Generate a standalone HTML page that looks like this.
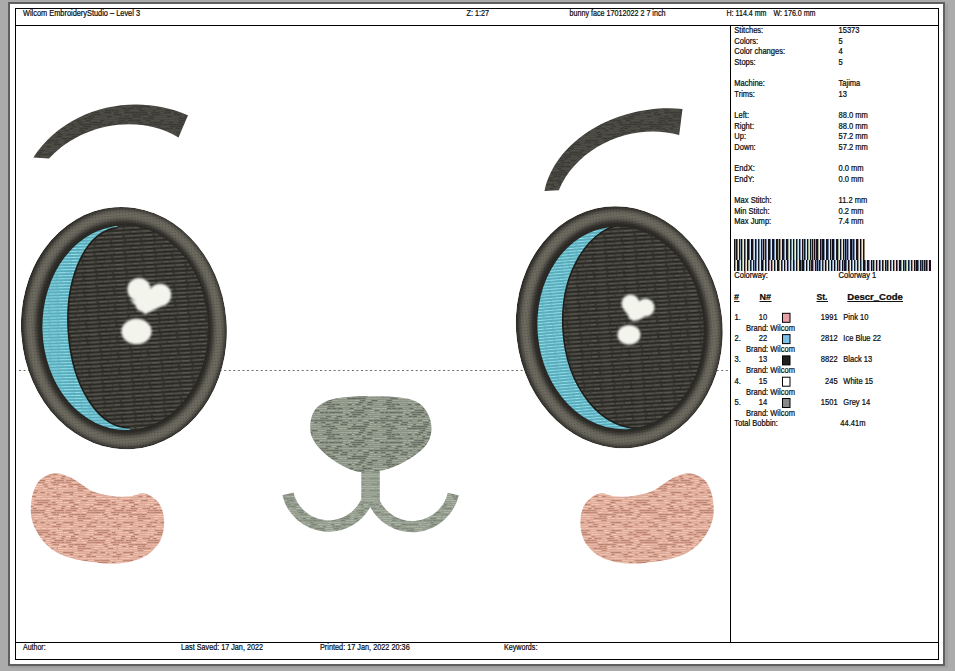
<!DOCTYPE html>
<html><head><meta charset="utf-8"><style>
html,body{margin:0;padding:0;background:#ababab;}
svg{display:block;}
text{font-family:"Liberation Sans", sans-serif;}
</style></head><body>
<svg width="955" height="671" viewBox="0 0 955 671">
<defs><filter id="blur2" x="-20%" y="-20%" width="140%" height="140%"><feGaussianBlur stdDeviation="2.2"/></filter>
<filter id="blur05" x="-20%" y="-20%" width="140%" height="140%"><feGaussianBlur stdDeviation="1.0"/></filter>
<pattern id="pupilTex" width="30" height="16" patternUnits="userSpaceOnUse"><rect width="30" height="16" fill="#383732"/><rect x="-5.2" y="0.0" width="9.1" height="1.3" fill="#595850"/><rect x="24.8" y="0.0" width="9.1" height="1.3" fill="#595850"/><rect x="4.9" y="0.0" width="7.0" height="1.3" fill="#53524a"/><rect x="13.3" y="0.0" width="6.3" height="1.3" fill="#595850"/><rect x="20.3" y="0.0" width="4.2" height="1.3" fill="#53524a"/><rect x="25.8" y="0.0" width="8.6" height="1.3" fill="#595850"/><rect x="-4.2" y="0.0" width="8.6" height="1.3" fill="#595850"/><rect x="0" y="2.2" width="30" height="1.0" fill="#22211e"/><rect x="-4.4" y="4.0" width="8.8" height="1.3" fill="#5e5d54"/><rect x="25.6" y="4.0" width="8.8" height="1.3" fill="#5e5d54"/><rect x="6.8" y="4.0" width="9.4" height="1.3" fill="#595850"/><rect x="16.8" y="4.0" width="7.9" height="1.3" fill="#595850"/><rect x="27.0" y="4.0" width="6.3" height="1.3" fill="#595850"/><rect x="-3.0" y="4.0" width="6.3" height="1.3" fill="#595850"/><rect x="0" y="6.2" width="30" height="1.0" fill="#22211e"/><rect x="-1.6" y="8.0" width="7.2" height="1.3" fill="#53524a"/><rect x="28.4" y="8.0" width="7.2" height="1.3" fill="#53524a"/><rect x="7.9" y="8.0" width="7.3" height="1.3" fill="#53524a"/><rect x="16.2" y="8.0" width="5.3" height="1.3" fill="#53524a"/><rect x="23.9" y="8.0" width="9.6" height="1.3" fill="#53524a"/><rect x="-6.1" y="8.0" width="9.6" height="1.3" fill="#53524a"/><rect x="0" y="10.2" width="30" height="1.0" fill="#22211e"/><rect x="-2.7" y="12.0" width="7.9" height="1.3" fill="#595850"/><rect x="27.3" y="12.0" width="7.9" height="1.3" fill="#595850"/><rect x="7.0" y="12.0" width="8.3" height="1.3" fill="#53524a"/><rect x="16.0" y="12.0" width="6.0" height="1.3" fill="#5e5d54"/><rect x="24.5" y="12.0" width="7.0" height="1.3" fill="#53524a"/><rect x="-5.5" y="12.0" width="7.0" height="1.3" fill="#53524a"/><rect x="0" y="14.2" width="30" height="1.0" fill="#22211e"/></pattern>
<pattern id="blueTex" width="30" height="12" patternUnits="userSpaceOnUse"><rect width="30" height="12" fill="#70c6d8"/><rect x="-0.3" y="0.0" width="7.7" height="1.0" fill="#90dcea"/><rect x="29.7" y="0.0" width="7.7" height="1.0" fill="#90dcea"/><rect x="8.1" y="0.0" width="4.8" height="1.0" fill="#90dcea"/><rect x="14.5" y="0.0" width="6.3" height="1.0" fill="#96e0ec"/><rect x="21.7" y="0.0" width="4.1" height="1.0" fill="#90dcea"/><rect x="27.2" y="0.0" width="3.8" height="1.0" fill="#96e0ec"/><rect x="-2.8" y="0.0" width="3.8" height="1.0" fill="#96e0ec"/><rect x="0" y="1.5" width="30" height="1.0" fill="#44929f"/><rect x="-1.2" y="3.0" width="7.3" height="1.0" fill="#84d4e4"/><rect x="28.8" y="3.0" width="7.3" height="1.0" fill="#84d4e4"/><rect x="8.0" y="3.0" width="5.7" height="1.0" fill="#96e0ec"/><rect x="15.0" y="3.0" width="7.5" height="1.0" fill="#90dcea"/><rect x="23.6" y="3.0" width="7.7" height="1.0" fill="#96e0ec"/><rect x="-6.4" y="3.0" width="7.7" height="1.0" fill="#96e0ec"/><rect x="0" y="4.5" width="30" height="1.0" fill="#44929f"/><rect x="-0.7" y="6.0" width="3.8" height="1.0" fill="#90dcea"/><rect x="29.3" y="6.0" width="3.8" height="1.0" fill="#90dcea"/><rect x="4.0" y="6.0" width="3.1" height="1.0" fill="#96e0ec"/><rect x="7.9" y="6.0" width="5.6" height="1.0" fill="#96e0ec"/><rect x="15.4" y="6.0" width="6.4" height="1.0" fill="#90dcea"/><rect x="23.8" y="6.0" width="5.2" height="1.0" fill="#96e0ec"/><rect x="0" y="7.5" width="30" height="1.0" fill="#44929f"/><rect x="-0.6" y="9.0" width="6.8" height="1.0" fill="#84d4e4"/><rect x="29.4" y="9.0" width="6.8" height="1.0" fill="#84d4e4"/><rect x="7.3" y="9.0" width="7.9" height="1.0" fill="#96e0ec"/><rect x="15.9" y="9.0" width="6.8" height="1.0" fill="#84d4e4"/><rect x="24.3" y="9.0" width="6.3" height="1.0" fill="#90dcea"/><rect x="-5.7" y="9.0" width="6.3" height="1.0" fill="#90dcea"/><rect x="0" y="10.5" width="30" height="1.0" fill="#44929f"/></pattern>
<pattern id="cheekTex" width="60" height="30" patternUnits="userSpaceOnUse"><rect width="60" height="30" fill="#dea896"/><rect x="-3.0" y="0.0" width="4.2" height="1.1" fill="#c08a78"/><rect x="57.0" y="0.0" width="4.2" height="1.1" fill="#c08a78"/><rect x="2.2" y="0.0" width="3.9" height="1.1" fill="#e6b6a4"/><rect x="6.2" y="0.0" width="2.1" height="1.1" fill="#b88270"/><rect x="8.6" y="0.0" width="2.9" height="1.1" fill="#b88270"/><rect x="12.2" y="0.0" width="4.2" height="1.1" fill="#b88270"/><rect x="17.1" y="0.0" width="2.6" height="1.1" fill="#f2c8b6"/><rect x="20.8" y="0.0" width="4.1" height="1.1" fill="#eec2b0"/><rect x="25.7" y="0.0" width="2.3" height="1.1" fill="#e6b6a4"/><rect x="28.0" y="0.0" width="5.1" height="1.1" fill="#c08a78"/><rect x="33.7" y="0.0" width="4.9" height="1.1" fill="#b88270"/><rect x="39.4" y="0.0" width="5.7" height="1.1" fill="#b88270"/><rect x="45.9" y="0.0" width="4.3" height="1.1" fill="#f2c8b6"/><rect x="51.3" y="0.0" width="2.4" height="1.1" fill="#f2c8b6"/><rect x="54.3" y="0.0" width="3.0" height="1.1" fill="#b88270"/><rect x="58.3" y="0.0" width="5.4" height="1.1" fill="#b88270"/><rect x="-1.7" y="0.0" width="5.4" height="1.1" fill="#b88270"/><rect x="-2.5" y="2.0" width="3.4" height="1.1" fill="#e6b6a4"/><rect x="57.5" y="2.0" width="3.4" height="1.1" fill="#e6b6a4"/><rect x="1.4" y="2.0" width="2.9" height="1.1" fill="#c08a78"/><rect x="5.2" y="2.0" width="5.7" height="1.1" fill="#c08a78"/><rect x="12.1" y="2.0" width="4.7" height="1.1" fill="#f2c8b6"/><rect x="17.6" y="2.0" width="3.3" height="1.1" fill="#e6b6a4"/><rect x="22.0" y="2.0" width="4.3" height="1.1" fill="#f2c8b6"/><rect x="27.0" y="2.0" width="6.0" height="1.1" fill="#c08a78"/><rect x="33.3" y="2.0" width="2.3" height="1.1" fill="#b88270"/><rect x="35.7" y="2.0" width="5.2" height="1.1" fill="#b88270"/><rect x="42.0" y="2.0" width="2.1" height="1.1" fill="#b88270"/><rect x="45.0" y="2.0" width="5.5" height="1.1" fill="#eec2b0"/><rect x="51.2" y="2.0" width="5.0" height="1.1" fill="#b88270"/><rect x="57.1" y="2.0" width="3.3" height="1.1" fill="#c08a78"/><rect x="-2.9" y="2.0" width="3.3" height="1.1" fill="#c08a78"/><rect x="-0.0" y="4.0" width="3.2" height="1.1" fill="#eec2b0"/><rect x="60.0" y="4.0" width="3.2" height="1.1" fill="#eec2b0"/><rect x="3.4" y="4.0" width="4.1" height="1.1" fill="#f2c8b6"/><rect x="8.7" y="4.0" width="3.2" height="1.1" fill="#c08a78"/><rect x="12.0" y="4.0" width="2.2" height="1.1" fill="#c08a78"/><rect x="14.6" y="4.0" width="5.8" height="1.1" fill="#b88270"/><rect x="20.9" y="4.0" width="5.5" height="1.1" fill="#b88270"/><rect x="27.1" y="4.0" width="4.4" height="1.1" fill="#e6b6a4"/><rect x="31.6" y="4.0" width="5.9" height="1.1" fill="#e6b6a4"/><rect x="37.8" y="4.0" width="4.5" height="1.1" fill="#f2c8b6"/><rect x="43.5" y="4.0" width="3.7" height="1.1" fill="#c08a78"/><rect x="47.9" y="4.0" width="4.2" height="1.1" fill="#eec2b0"/><rect x="53.0" y="4.0" width="5.9" height="1.1" fill="#c08a78"/><rect x="59.0" y="4.0" width="4.5" height="1.1" fill="#f2c8b6"/><rect x="-1.0" y="4.0" width="4.5" height="1.1" fill="#f2c8b6"/><rect x="-1.5" y="6.0" width="3.9" height="1.1" fill="#c08a78"/><rect x="58.5" y="6.0" width="3.9" height="1.1" fill="#c08a78"/><rect x="3.1" y="6.0" width="3.1" height="1.1" fill="#b88270"/><rect x="6.2" y="6.0" width="2.2" height="1.1" fill="#eec2b0"/><rect x="9.6" y="6.0" width="3.0" height="1.1" fill="#b88270"/><rect x="13.0" y="6.0" width="4.4" height="1.1" fill="#f2c8b6"/><rect x="17.9" y="6.0" width="3.3" height="1.1" fill="#c08a78"/><rect x="22.1" y="6.0" width="3.1" height="1.1" fill="#b88270"/><rect x="25.3" y="6.0" width="5.3" height="1.1" fill="#e6b6a4"/><rect x="31.4" y="6.0" width="2.5" height="1.1" fill="#e6b6a4"/><rect x="34.2" y="6.0" width="5.2" height="1.1" fill="#f2c8b6"/><rect x="39.8" y="6.0" width="4.7" height="1.1" fill="#eec2b0"/><rect x="44.6" y="6.0" width="3.3" height="1.1" fill="#c08a78"/><rect x="48.7" y="6.0" width="2.9" height="1.1" fill="#f2c8b6"/><rect x="51.7" y="6.0" width="5.0" height="1.1" fill="#f2c8b6"/><rect x="57.7" y="6.0" width="3.8" height="1.1" fill="#f2c8b6"/><rect x="-2.3" y="6.0" width="3.8" height="1.1" fill="#f2c8b6"/><rect x="-3.9" y="8.0" width="5.8" height="1.1" fill="#c08a78"/><rect x="56.1" y="8.0" width="5.8" height="1.1" fill="#c08a78"/><rect x="2.9" y="8.0" width="5.4" height="1.1" fill="#f2c8b6"/><rect x="9.3" y="8.0" width="3.4" height="1.1" fill="#eec2b0"/><rect x="13.7" y="8.0" width="3.4" height="1.1" fill="#f2c8b6"/><rect x="17.5" y="8.0" width="4.1" height="1.1" fill="#c08a78"/><rect x="22.2" y="8.0" width="4.5" height="1.1" fill="#c08a78"/><rect x="27.2" y="8.0" width="3.6" height="1.1" fill="#b88270"/><rect x="31.0" y="8.0" width="2.0" height="1.1" fill="#e6b6a4"/><rect x="34.2" y="8.0" width="3.7" height="1.1" fill="#f2c8b6"/><rect x="38.0" y="8.0" width="3.8" height="1.1" fill="#e6b6a4"/><rect x="43.0" y="8.0" width="4.2" height="1.1" fill="#f2c8b6"/><rect x="48.2" y="8.0" width="5.4" height="1.1" fill="#c08a78"/><rect x="53.8" y="8.0" width="3.0" height="1.1" fill="#eec2b0"/><rect x="57.8" y="8.0" width="4.8" height="1.1" fill="#f2c8b6"/><rect x="-2.2" y="8.0" width="4.8" height="1.1" fill="#f2c8b6"/><rect x="-0.4" y="10.0" width="4.3" height="1.1" fill="#eec2b0"/><rect x="59.6" y="10.0" width="4.3" height="1.1" fill="#eec2b0"/><rect x="4.5" y="10.0" width="2.5" height="1.1" fill="#e6b6a4"/><rect x="7.3" y="10.0" width="4.7" height="1.1" fill="#e6b6a4"/><rect x="12.6" y="10.0" width="2.2" height="1.1" fill="#e6b6a4"/><rect x="15.0" y="10.0" width="2.5" height="1.1" fill="#e6b6a4"/><rect x="18.0" y="10.0" width="5.1" height="1.1" fill="#c08a78"/><rect x="23.4" y="10.0" width="2.5" height="1.1" fill="#eec2b0"/><rect x="26.1" y="10.0" width="5.2" height="1.1" fill="#f2c8b6"/><rect x="32.3" y="10.0" width="2.0" height="1.1" fill="#e6b6a4"/><rect x="35.4" y="10.0" width="2.2" height="1.1" fill="#c08a78"/><rect x="37.9" y="10.0" width="4.5" height="1.1" fill="#e6b6a4"/><rect x="42.8" y="10.0" width="3.9" height="1.1" fill="#eec2b0"/><rect x="47.8" y="10.0" width="5.1" height="1.1" fill="#eec2b0"/><rect x="53.0" y="10.0" width="2.3" height="1.1" fill="#eec2b0"/><rect x="56.3" y="10.0" width="2.3" height="1.1" fill="#e6b6a4"/><rect x="59.2" y="10.0" width="2.6" height="1.1" fill="#eec2b0"/><rect x="-0.8" y="10.0" width="2.6" height="1.1" fill="#eec2b0"/><rect x="-1.4" y="12.0" width="4.3" height="1.1" fill="#c08a78"/><rect x="58.6" y="12.0" width="4.3" height="1.1" fill="#c08a78"/><rect x="3.3" y="12.0" width="6.0" height="1.1" fill="#b88270"/><rect x="9.4" y="12.0" width="4.2" height="1.1" fill="#b88270"/><rect x="14.5" y="12.0" width="4.3" height="1.1" fill="#eec2b0"/><rect x="19.2" y="12.0" width="4.4" height="1.1" fill="#e6b6a4"/><rect x="24.1" y="12.0" width="5.2" height="1.1" fill="#e6b6a4"/><rect x="30.4" y="12.0" width="2.2" height="1.1" fill="#b88270"/><rect x="33.5" y="12.0" width="3.3" height="1.1" fill="#b88270"/><rect x="37.3" y="12.0" width="3.0" height="1.1" fill="#e6b6a4"/><rect x="40.6" y="12.0" width="4.4" height="1.1" fill="#b88270"/><rect x="45.3" y="12.0" width="2.5" height="1.1" fill="#eec2b0"/><rect x="48.9" y="12.0" width="3.5" height="1.1" fill="#e6b6a4"/><rect x="53.3" y="12.0" width="3.0" height="1.1" fill="#b88270"/><rect x="57.2" y="12.0" width="5.8" height="1.1" fill="#e6b6a4"/><rect x="-2.8" y="12.0" width="5.8" height="1.1" fill="#e6b6a4"/><rect x="-1.3" y="14.0" width="4.9" height="1.1" fill="#e6b6a4"/><rect x="58.7" y="14.0" width="4.9" height="1.1" fill="#e6b6a4"/><rect x="4.2" y="14.0" width="5.2" height="1.1" fill="#eec2b0"/><rect x="10.1" y="14.0" width="2.9" height="1.1" fill="#b88270"/><rect x="13.1" y="14.0" width="2.4" height="1.1" fill="#eec2b0"/><rect x="16.2" y="14.0" width="3.5" height="1.1" fill="#eec2b0"/><rect x="20.1" y="14.0" width="5.4" height="1.1" fill="#eec2b0"/><rect x="26.5" y="14.0" width="4.7" height="1.1" fill="#c08a78"/><rect x="31.9" y="14.0" width="5.2" height="1.1" fill="#eec2b0"/><rect x="38.3" y="14.0" width="4.3" height="1.1" fill="#e6b6a4"/><rect x="43.4" y="14.0" width="2.4" height="1.1" fill="#eec2b0"/><rect x="47.0" y="14.0" width="2.2" height="1.1" fill="#c08a78"/><rect x="50.3" y="14.0" width="2.7" height="1.1" fill="#eec2b0"/><rect x="53.3" y="14.0" width="2.7" height="1.1" fill="#f2c8b6"/><rect x="56.6" y="14.0" width="4.8" height="1.1" fill="#b88270"/><rect x="-3.4" y="14.0" width="4.8" height="1.1" fill="#b88270"/><rect x="-1.6" y="16.0" width="5.8" height="1.1" fill="#e6b6a4"/><rect x="58.4" y="16.0" width="5.8" height="1.1" fill="#e6b6a4"/><rect x="4.7" y="16.0" width="2.3" height="1.1" fill="#e6b6a4"/><rect x="7.3" y="16.0" width="5.7" height="1.1" fill="#f2c8b6"/><rect x="13.5" y="16.0" width="4.3" height="1.1" fill="#e6b6a4"/><rect x="18.6" y="16.0" width="4.1" height="1.1" fill="#b88270"/><rect x="22.8" y="16.0" width="3.6" height="1.1" fill="#f2c8b6"/><rect x="26.6" y="16.0" width="4.0" height="1.1" fill="#b88270"/><rect x="31.7" y="16.0" width="4.1" height="1.1" fill="#b88270"/><rect x="36.5" y="16.0" width="5.4" height="1.1" fill="#f2c8b6"/><rect x="42.2" y="16.0" width="2.8" height="1.1" fill="#e6b6a4"/><rect x="45.7" y="16.0" width="5.7" height="1.1" fill="#e6b6a4"/><rect x="52.5" y="16.0" width="3.2" height="1.1" fill="#b88270"/><rect x="56.4" y="16.0" width="4.3" height="1.1" fill="#c08a78"/><rect x="-3.6" y="16.0" width="4.3" height="1.1" fill="#c08a78"/><rect x="-2.8" y="18.0" width="3.1" height="1.1" fill="#b88270"/><rect x="57.2" y="18.0" width="3.1" height="1.1" fill="#b88270"/><rect x="0.5" y="18.0" width="4.3" height="1.1" fill="#f2c8b6"/><rect x="5.2" y="18.0" width="5.1" height="1.1" fill="#f2c8b6"/><rect x="10.8" y="18.0" width="4.8" height="1.1" fill="#e6b6a4"/><rect x="15.8" y="18.0" width="4.3" height="1.1" fill="#e6b6a4"/><rect x="20.2" y="18.0" width="6.0" height="1.1" fill="#eec2b0"/><rect x="27.2" y="18.0" width="3.6" height="1.1" fill="#eec2b0"/><rect x="31.4" y="18.0" width="2.9" height="1.1" fill="#f2c8b6"/><rect x="35.1" y="18.0" width="5.1" height="1.1" fill="#eec2b0"/><rect x="41.3" y="18.0" width="5.4" height="1.1" fill="#f2c8b6"/><rect x="47.8" y="18.0" width="5.1" height="1.1" fill="#f2c8b6"/><rect x="53.1" y="18.0" width="4.8" height="1.1" fill="#eec2b0"/><rect x="59.0" y="18.0" width="3.0" height="1.1" fill="#eec2b0"/><rect x="-1.0" y="18.0" width="3.0" height="1.1" fill="#eec2b0"/><rect x="-2.3" y="20.0" width="4.9" height="1.1" fill="#eec2b0"/><rect x="57.7" y="20.0" width="4.9" height="1.1" fill="#eec2b0"/><rect x="2.8" y="20.0" width="3.1" height="1.1" fill="#c08a78"/><rect x="5.9" y="20.0" width="3.8" height="1.1" fill="#c08a78"/><rect x="9.7" y="20.0" width="3.3" height="1.1" fill="#b88270"/><rect x="13.5" y="20.0" width="2.3" height="1.1" fill="#e6b6a4"/><rect x="16.7" y="20.0" width="4.0" height="1.1" fill="#f2c8b6"/><rect x="21.3" y="20.0" width="2.5" height="1.1" fill="#c08a78"/><rect x="23.8" y="20.0" width="3.7" height="1.1" fill="#b88270"/><rect x="28.6" y="20.0" width="5.6" height="1.1" fill="#eec2b0"/><rect x="34.9" y="20.0" width="4.8" height="1.1" fill="#c08a78"/><rect x="40.6" y="20.0" width="3.2" height="1.1" fill="#c08a78"/><rect x="43.9" y="20.0" width="5.8" height="1.1" fill="#c08a78"/><rect x="50.5" y="20.0" width="4.1" height="1.1" fill="#eec2b0"/><rect x="55.5" y="20.0" width="4.0" height="1.1" fill="#eec2b0"/><rect x="-1.3" y="22.0" width="4.3" height="1.1" fill="#f2c8b6"/><rect x="58.7" y="22.0" width="4.3" height="1.1" fill="#f2c8b6"/><rect x="3.8" y="22.0" width="4.9" height="1.1" fill="#f2c8b6"/><rect x="8.9" y="22.0" width="5.6" height="1.1" fill="#b88270"/><rect x="14.6" y="22.0" width="5.7" height="1.1" fill="#f2c8b6"/><rect x="21.4" y="22.0" width="4.6" height="1.1" fill="#e6b6a4"/><rect x="26.5" y="22.0" width="3.2" height="1.1" fill="#f2c8b6"/><rect x="30.3" y="22.0" width="3.2" height="1.1" fill="#f2c8b6"/><rect x="34.4" y="22.0" width="2.4" height="1.1" fill="#f2c8b6"/><rect x="37.7" y="22.0" width="4.2" height="1.1" fill="#b88270"/><rect x="42.3" y="22.0" width="3.1" height="1.1" fill="#b88270"/><rect x="45.4" y="22.0" width="2.5" height="1.1" fill="#b88270"/><rect x="48.6" y="22.0" width="3.0" height="1.1" fill="#e6b6a4"/><rect x="52.0" y="22.0" width="3.3" height="1.1" fill="#b88270"/><rect x="55.9" y="22.0" width="5.2" height="1.1" fill="#eec2b0"/><rect x="-4.1" y="22.0" width="5.2" height="1.1" fill="#eec2b0"/><rect x="-0.6" y="24.0" width="2.4" height="1.1" fill="#c08a78"/><rect x="59.4" y="24.0" width="2.4" height="1.1" fill="#c08a78"/><rect x="2.5" y="24.0" width="4.7" height="1.1" fill="#e6b6a4"/><rect x="8.2" y="24.0" width="4.9" height="1.1" fill="#f2c8b6"/><rect x="14.0" y="24.0" width="4.3" height="1.1" fill="#b88270"/><rect x="19.2" y="24.0" width="5.0" height="1.1" fill="#e6b6a4"/><rect x="24.9" y="24.0" width="5.4" height="1.1" fill="#f2c8b6"/><rect x="31.0" y="24.0" width="2.7" height="1.1" fill="#f2c8b6"/><rect x="33.9" y="24.0" width="3.0" height="1.1" fill="#c08a78"/><rect x="37.0" y="24.0" width="5.2" height="1.1" fill="#b88270"/><rect x="43.3" y="24.0" width="3.5" height="1.1" fill="#e6b6a4"/><rect x="47.9" y="24.0" width="3.2" height="1.1" fill="#b88270"/><rect x="52.4" y="24.0" width="4.7" height="1.1" fill="#c08a78"/><rect x="58.2" y="24.0" width="4.7" height="1.1" fill="#eec2b0"/><rect x="-1.8" y="24.0" width="4.7" height="1.1" fill="#eec2b0"/><rect x="-1.1" y="26.0" width="2.0" height="1.1" fill="#f2c8b6"/><rect x="58.9" y="26.0" width="2.0" height="1.1" fill="#f2c8b6"/><rect x="1.5" y="26.0" width="4.1" height="1.1" fill="#b88270"/><rect x="5.8" y="26.0" width="5.1" height="1.1" fill="#f2c8b6"/><rect x="11.0" y="26.0" width="4.0" height="1.1" fill="#b88270"/><rect x="15.1" y="26.0" width="3.1" height="1.1" fill="#f2c8b6"/><rect x="18.4" y="26.0" width="5.2" height="1.1" fill="#e6b6a4"/><rect x="24.7" y="26.0" width="2.1" height="1.1" fill="#e6b6a4"/><rect x="27.1" y="26.0" width="2.3" height="1.1" fill="#e6b6a4"/><rect x="29.4" y="26.0" width="3.4" height="1.1" fill="#c08a78"/><rect x="33.8" y="26.0" width="4.8" height="1.1" fill="#f2c8b6"/><rect x="38.7" y="26.0" width="5.4" height="1.1" fill="#eec2b0"/><rect x="44.9" y="26.0" width="5.0" height="1.1" fill="#c08a78"/><rect x="51.1" y="26.0" width="2.8" height="1.1" fill="#eec2b0"/><rect x="54.9" y="26.0" width="3.7" height="1.1" fill="#f2c8b6"/><rect x="59.3" y="26.0" width="2.4" height="1.1" fill="#eec2b0"/><rect x="-0.7" y="26.0" width="2.4" height="1.1" fill="#eec2b0"/><rect x="-0.6" y="28.0" width="4.8" height="1.1" fill="#b88270"/><rect x="59.4" y="28.0" width="4.8" height="1.1" fill="#b88270"/><rect x="4.8" y="28.0" width="4.8" height="1.1" fill="#e6b6a4"/><rect x="10.6" y="28.0" width="2.8" height="1.1" fill="#b88270"/><rect x="13.8" y="28.0" width="3.9" height="1.1" fill="#b88270"/><rect x="18.2" y="28.0" width="3.8" height="1.1" fill="#eec2b0"/><rect x="22.9" y="28.0" width="3.5" height="1.1" fill="#c08a78"/><rect x="26.9" y="28.0" width="3.4" height="1.1" fill="#b88270"/><rect x="30.6" y="28.0" width="2.0" height="1.1" fill="#f2c8b6"/><rect x="32.9" y="28.0" width="3.5" height="1.1" fill="#b88270"/><rect x="37.0" y="28.0" width="2.6" height="1.1" fill="#eec2b0"/><rect x="39.9" y="28.0" width="3.6" height="1.1" fill="#f2c8b6"/><rect x="44.3" y="28.0" width="2.6" height="1.1" fill="#e6b6a4"/><rect x="47.0" y="28.0" width="4.0" height="1.1" fill="#eec2b0"/><rect x="52.0" y="28.0" width="3.6" height="1.1" fill="#c08a78"/><rect x="56.1" y="28.0" width="4.8" height="1.1" fill="#eec2b0"/><rect x="-3.9" y="28.0" width="4.8" height="1.1" fill="#eec2b0"/></pattern>
<pattern id="noseTex" width="60" height="30" patternUnits="userSpaceOnUse"><rect width="60" height="30" fill="#8a9184"/><rect x="56.9" y="0.0" width="2.4" height="1.1" fill="#646c60"/><rect x="-0.1" y="0.0" width="2.4" height="1.1" fill="#a8b0a0"/><rect x="59.9" y="0.0" width="2.4" height="1.1" fill="#a8b0a0"/><rect x="2.8" y="0.0" width="5.7" height="1.1" fill="#a8b0a0"/><rect x="8.7" y="0.0" width="4.1" height="1.1" fill="#6a7266"/><rect x="13.8" y="0.0" width="5.3" height="1.1" fill="#6a7266"/><rect x="19.4" y="0.0" width="5.7" height="1.1" fill="#6a7266"/><rect x="26.0" y="0.0" width="2.8" height="1.1" fill="#6a7266"/><rect x="29.2" y="0.0" width="5.5" height="1.1" fill="#6a7266"/><rect x="34.7" y="0.0" width="4.4" height="1.1" fill="#646c60"/><rect x="39.8" y="0.0" width="2.7" height="1.1" fill="#646c60"/><rect x="42.8" y="0.0" width="5.8" height="1.1" fill="#98a090"/><rect x="49.6" y="0.0" width="2.0" height="1.1" fill="#6a7266"/><rect x="52.3" y="0.0" width="5.5" height="1.1" fill="#98a090"/><rect x="58.1" y="0.0" width="3.7" height="1.1" fill="#6a7266"/><rect x="-1.9" y="0.0" width="3.7" height="1.1" fill="#6a7266"/><rect x="56.6" y="2.0" width="3.2" height="1.1" fill="#a8b0a0"/><rect x="-0.0" y="2.0" width="3.9" height="1.1" fill="#6a7266"/><rect x="60.0" y="2.0" width="3.9" height="1.1" fill="#6a7266"/><rect x="4.4" y="2.0" width="4.6" height="1.1" fill="#6a7266"/><rect x="9.2" y="2.0" width="4.7" height="1.1" fill="#a8b0a0"/><rect x="14.4" y="2.0" width="2.8" height="1.1" fill="#646c60"/><rect x="17.5" y="2.0" width="3.4" height="1.1" fill="#98a090"/><rect x="21.3" y="2.0" width="4.2" height="1.1" fill="#6a7266"/><rect x="25.7" y="2.0" width="2.2" height="1.1" fill="#a2aa9a"/><rect x="28.3" y="2.0" width="4.3" height="1.1" fill="#a2aa9a"/><rect x="32.8" y="2.0" width="5.7" height="1.1" fill="#6a7266"/><rect x="39.0" y="2.0" width="2.2" height="1.1" fill="#a8b0a0"/><rect x="42.3" y="2.0" width="5.8" height="1.1" fill="#6a7266"/><rect x="48.1" y="2.0" width="3.2" height="1.1" fill="#a2aa9a"/><rect x="52.2" y="2.0" width="3.6" height="1.1" fill="#98a090"/><rect x="56.7" y="2.0" width="2.3" height="1.1" fill="#98a090"/><rect x="59.2" y="2.0" width="3.8" height="1.1" fill="#a2aa9a"/><rect x="-0.8" y="2.0" width="3.8" height="1.1" fill="#a2aa9a"/><rect x="-1.6" y="4.0" width="2.6" height="1.1" fill="#98a090"/><rect x="58.4" y="4.0" width="2.6" height="1.1" fill="#98a090"/><rect x="1.0" y="4.0" width="2.2" height="1.1" fill="#a2aa9a"/><rect x="3.7" y="4.0" width="5.2" height="1.1" fill="#6a7266"/><rect x="9.6" y="4.0" width="3.8" height="1.1" fill="#a2aa9a"/><rect x="13.8" y="4.0" width="2.8" height="1.1" fill="#a8b0a0"/><rect x="16.7" y="4.0" width="4.9" height="1.1" fill="#98a090"/><rect x="22.5" y="4.0" width="2.6" height="1.1" fill="#a8b0a0"/><rect x="25.7" y="4.0" width="4.3" height="1.1" fill="#6a7266"/><rect x="31.3" y="4.0" width="2.5" height="1.1" fill="#98a090"/><rect x="34.1" y="4.0" width="6.0" height="1.1" fill="#a2aa9a"/><rect x="40.7" y="4.0" width="3.0" height="1.1" fill="#646c60"/><rect x="44.2" y="4.0" width="2.9" height="1.1" fill="#646c60"/><rect x="47.4" y="4.0" width="5.6" height="1.1" fill="#a2aa9a"/><rect x="53.6" y="4.0" width="2.1" height="1.1" fill="#6a7266"/><rect x="56.0" y="4.0" width="4.1" height="1.1" fill="#a2aa9a"/><rect x="-4.0" y="4.0" width="4.1" height="1.1" fill="#a2aa9a"/><rect x="-3.0" y="6.0" width="3.3" height="1.1" fill="#6a7266"/><rect x="57.0" y="6.0" width="3.3" height="1.1" fill="#6a7266"/><rect x="1.0" y="6.0" width="6.0" height="1.1" fill="#646c60"/><rect x="8.1" y="6.0" width="4.6" height="1.1" fill="#a8b0a0"/><rect x="13.3" y="6.0" width="2.4" height="1.1" fill="#a2aa9a"/><rect x="16.8" y="6.0" width="4.3" height="1.1" fill="#a2aa9a"/><rect x="21.5" y="6.0" width="4.6" height="1.1" fill="#6a7266"/><rect x="27.1" y="6.0" width="4.1" height="1.1" fill="#6a7266"/><rect x="31.7" y="6.0" width="3.6" height="1.1" fill="#646c60"/><rect x="35.3" y="6.0" width="5.9" height="1.1" fill="#a2aa9a"/><rect x="41.2" y="6.0" width="5.6" height="1.1" fill="#a2aa9a"/><rect x="47.8" y="6.0" width="3.1" height="1.1" fill="#a8b0a0"/><rect x="51.9" y="6.0" width="4.8" height="1.1" fill="#646c60"/><rect x="57.3" y="6.0" width="5.0" height="1.1" fill="#646c60"/><rect x="-2.7" y="6.0" width="5.0" height="1.1" fill="#646c60"/><rect x="-4.0" y="8.0" width="5.7" height="1.1" fill="#a8b0a0"/><rect x="56.0" y="8.0" width="5.7" height="1.1" fill="#a8b0a0"/><rect x="2.4" y="8.0" width="3.0" height="1.1" fill="#646c60"/><rect x="6.4" y="8.0" width="5.1" height="1.1" fill="#a2aa9a"/><rect x="12.2" y="8.0" width="5.5" height="1.1" fill="#a2aa9a"/><rect x="17.9" y="8.0" width="4.4" height="1.1" fill="#98a090"/><rect x="23.3" y="8.0" width="3.9" height="1.1" fill="#98a090"/><rect x="27.7" y="8.0" width="2.3" height="1.1" fill="#98a090"/><rect x="30.2" y="8.0" width="4.2" height="1.1" fill="#6a7266"/><rect x="35.1" y="8.0" width="2.6" height="1.1" fill="#6a7266"/><rect x="37.8" y="8.0" width="5.5" height="1.1" fill="#a8b0a0"/><rect x="43.7" y="8.0" width="3.4" height="1.1" fill="#a8b0a0"/><rect x="47.2" y="8.0" width="4.2" height="1.1" fill="#646c60"/><rect x="51.6" y="8.0" width="5.9" height="1.1" fill="#646c60"/><rect x="57.8" y="8.0" width="3.9" height="1.1" fill="#646c60"/><rect x="-2.2" y="8.0" width="3.9" height="1.1" fill="#646c60"/><rect x="-3.5" y="10.0" width="4.5" height="1.1" fill="#6a7266"/><rect x="56.5" y="10.0" width="4.5" height="1.1" fill="#6a7266"/><rect x="1.6" y="10.0" width="3.7" height="1.1" fill="#646c60"/><rect x="5.4" y="10.0" width="5.5" height="1.1" fill="#a2aa9a"/><rect x="11.7" y="10.0" width="5.7" height="1.1" fill="#646c60"/><rect x="17.9" y="10.0" width="5.2" height="1.1" fill="#a2aa9a"/><rect x="23.5" y="10.0" width="2.7" height="1.1" fill="#a2aa9a"/><rect x="26.6" y="10.0" width="5.4" height="1.1" fill="#6a7266"/><rect x="32.7" y="10.0" width="5.6" height="1.1" fill="#a2aa9a"/><rect x="38.3" y="10.0" width="3.2" height="1.1" fill="#98a090"/><rect x="41.7" y="10.0" width="5.1" height="1.1" fill="#98a090"/><rect x="47.4" y="10.0" width="2.3" height="1.1" fill="#a2aa9a"/><rect x="50.2" y="10.0" width="3.2" height="1.1" fill="#a2aa9a"/><rect x="54.3" y="10.0" width="5.9" height="1.1" fill="#a8b0a0"/><rect x="-5.7" y="10.0" width="5.9" height="1.1" fill="#a8b0a0"/><rect x="-1.6" y="12.0" width="3.3" height="1.1" fill="#646c60"/><rect x="58.4" y="12.0" width="3.3" height="1.1" fill="#646c60"/><rect x="2.6" y="12.0" width="4.3" height="1.1" fill="#98a090"/><rect x="7.8" y="12.0" width="4.5" height="1.1" fill="#646c60"/><rect x="12.8" y="12.0" width="3.0" height="1.1" fill="#98a090"/><rect x="16.2" y="12.0" width="4.6" height="1.1" fill="#a2aa9a"/><rect x="21.4" y="12.0" width="4.4" height="1.1" fill="#98a090"/><rect x="26.0" y="12.0" width="5.6" height="1.1" fill="#6a7266"/><rect x="31.9" y="12.0" width="5.2" height="1.1" fill="#98a090"/><rect x="38.1" y="12.0" width="2.3" height="1.1" fill="#a2aa9a"/><rect x="40.8" y="12.0" width="3.5" height="1.1" fill="#a2aa9a"/><rect x="44.6" y="12.0" width="2.1" height="1.1" fill="#a8b0a0"/><rect x="47.4" y="12.0" width="5.0" height="1.1" fill="#a8b0a0"/><rect x="53.3" y="12.0" width="5.2" height="1.1" fill="#a8b0a0"/><rect x="58.8" y="12.0" width="4.3" height="1.1" fill="#646c60"/><rect x="-1.2" y="12.0" width="4.3" height="1.1" fill="#646c60"/><rect x="-0.0" y="14.0" width="2.3" height="1.1" fill="#a8b0a0"/><rect x="60.0" y="14.0" width="2.3" height="1.1" fill="#a8b0a0"/><rect x="2.5" y="14.0" width="3.9" height="1.1" fill="#a2aa9a"/><rect x="7.1" y="14.0" width="5.3" height="1.1" fill="#6a7266"/><rect x="13.5" y="14.0" width="4.8" height="1.1" fill="#98a090"/><rect x="18.5" y="14.0" width="4.0" height="1.1" fill="#a2aa9a"/><rect x="22.9" y="14.0" width="2.9" height="1.1" fill="#6a7266"/><rect x="26.4" y="14.0" width="4.1" height="1.1" fill="#646c60"/><rect x="31.6" y="14.0" width="3.6" height="1.1" fill="#646c60"/><rect x="36.4" y="14.0" width="3.3" height="1.1" fill="#646c60"/><rect x="40.1" y="14.0" width="2.1" height="1.1" fill="#a2aa9a"/><rect x="43.3" y="14.0" width="3.8" height="1.1" fill="#98a090"/><rect x="47.8" y="14.0" width="3.5" height="1.1" fill="#646c60"/><rect x="52.0" y="14.0" width="2.6" height="1.1" fill="#a8b0a0"/><rect x="55.2" y="14.0" width="5.9" height="1.1" fill="#6a7266"/><rect x="-4.8" y="14.0" width="5.9" height="1.1" fill="#6a7266"/><rect x="57.2" y="16.0" width="2.4" height="1.1" fill="#6a7266"/><rect x="0.2" y="16.0" width="4.6" height="1.1" fill="#646c60"/><rect x="5.8" y="16.0" width="5.1" height="1.1" fill="#a2aa9a"/><rect x="12.0" y="16.0" width="2.3" height="1.1" fill="#a2aa9a"/><rect x="15.5" y="16.0" width="2.7" height="1.1" fill="#98a090"/><rect x="18.9" y="16.0" width="4.2" height="1.1" fill="#98a090"/><rect x="23.4" y="16.0" width="4.1" height="1.1" fill="#a2aa9a"/><rect x="28.4" y="16.0" width="2.8" height="1.1" fill="#6a7266"/><rect x="31.4" y="16.0" width="3.1" height="1.1" fill="#6a7266"/><rect x="35.2" y="16.0" width="4.5" height="1.1" fill="#a2aa9a"/><rect x="40.6" y="16.0" width="4.6" height="1.1" fill="#a2aa9a"/><rect x="46.2" y="16.0" width="4.9" height="1.1" fill="#98a090"/><rect x="51.6" y="16.0" width="2.0" height="1.1" fill="#98a090"/><rect x="53.8" y="16.0" width="3.6" height="1.1" fill="#a2aa9a"/><rect x="58.4" y="16.0" width="3.9" height="1.1" fill="#a8b0a0"/><rect x="-1.6" y="16.0" width="3.9" height="1.1" fill="#a8b0a0"/><rect x="-3.3" y="18.0" width="5.6" height="1.1" fill="#98a090"/><rect x="56.7" y="18.0" width="5.6" height="1.1" fill="#98a090"/><rect x="2.7" y="18.0" width="4.7" height="1.1" fill="#646c60"/><rect x="7.8" y="18.0" width="3.5" height="1.1" fill="#646c60"/><rect x="12.5" y="18.0" width="3.1" height="1.1" fill="#a8b0a0"/><rect x="16.0" y="18.0" width="5.2" height="1.1" fill="#a8b0a0"/><rect x="21.4" y="18.0" width="5.4" height="1.1" fill="#a8b0a0"/><rect x="27.0" y="18.0" width="4.2" height="1.1" fill="#646c60"/><rect x="32.3" y="18.0" width="4.1" height="1.1" fill="#646c60"/><rect x="37.7" y="18.0" width="4.8" height="1.1" fill="#646c60"/><rect x="42.9" y="18.0" width="2.7" height="1.1" fill="#98a090"/><rect x="46.3" y="18.0" width="2.4" height="1.1" fill="#98a090"/><rect x="49.8" y="18.0" width="3.4" height="1.1" fill="#646c60"/><rect x="53.9" y="18.0" width="2.1" height="1.1" fill="#a2aa9a"/><rect x="56.4" y="18.0" width="5.4" height="1.1" fill="#98a090"/><rect x="-3.6" y="18.0" width="5.4" height="1.1" fill="#98a090"/><rect x="-0.4" y="20.0" width="4.5" height="1.1" fill="#6a7266"/><rect x="59.6" y="20.0" width="4.5" height="1.1" fill="#6a7266"/><rect x="5.1" y="20.0" width="2.3" height="1.1" fill="#a2aa9a"/><rect x="8.5" y="20.0" width="5.5" height="1.1" fill="#a8b0a0"/><rect x="14.7" y="20.0" width="4.1" height="1.1" fill="#6a7266"/><rect x="19.9" y="20.0" width="2.7" height="1.1" fill="#a8b0a0"/><rect x="23.2" y="20.0" width="4.2" height="1.1" fill="#98a090"/><rect x="28.3" y="20.0" width="2.2" height="1.1" fill="#a8b0a0"/><rect x="30.8" y="20.0" width="4.4" height="1.1" fill="#a2aa9a"/><rect x="36.1" y="20.0" width="2.5" height="1.1" fill="#98a090"/><rect x="39.6" y="20.0" width="2.3" height="1.1" fill="#a2aa9a"/><rect x="42.6" y="20.0" width="4.5" height="1.1" fill="#a8b0a0"/><rect x="48.1" y="20.0" width="5.9" height="1.1" fill="#a8b0a0"/><rect x="54.6" y="20.0" width="2.6" height="1.1" fill="#6a7266"/><rect x="57.5" y="20.0" width="5.0" height="1.1" fill="#6a7266"/><rect x="-2.5" y="20.0" width="5.0" height="1.1" fill="#6a7266"/><rect x="-2.8" y="22.0" width="3.6" height="1.1" fill="#98a090"/><rect x="57.2" y="22.0" width="3.6" height="1.1" fill="#98a090"/><rect x="1.2" y="22.0" width="2.7" height="1.1" fill="#646c60"/><rect x="5.1" y="22.0" width="5.0" height="1.1" fill="#98a090"/><rect x="10.5" y="22.0" width="4.8" height="1.1" fill="#a2aa9a"/><rect x="16.1" y="22.0" width="3.7" height="1.1" fill="#a2aa9a"/><rect x="20.1" y="22.0" width="3.9" height="1.1" fill="#646c60"/><rect x="25.1" y="22.0" width="3.1" height="1.1" fill="#646c60"/><rect x="29.4" y="22.0" width="5.7" height="1.1" fill="#646c60"/><rect x="35.5" y="22.0" width="4.5" height="1.1" fill="#6a7266"/><rect x="40.3" y="22.0" width="2.3" height="1.1" fill="#646c60"/><rect x="42.9" y="22.0" width="3.1" height="1.1" fill="#a2aa9a"/><rect x="46.8" y="22.0" width="3.3" height="1.1" fill="#a2aa9a"/><rect x="50.8" y="22.0" width="4.8" height="1.1" fill="#6a7266"/><rect x="56.4" y="22.0" width="5.6" height="1.1" fill="#646c60"/><rect x="-3.6" y="22.0" width="5.6" height="1.1" fill="#646c60"/><rect x="-1.4" y="24.0" width="2.0" height="1.1" fill="#98a090"/><rect x="58.6" y="24.0" width="2.0" height="1.1" fill="#98a090"/><rect x="1.8" y="24.0" width="2.7" height="1.1" fill="#a2aa9a"/><rect x="5.1" y="24.0" width="2.4" height="1.1" fill="#6a7266"/><rect x="7.8" y="24.0" width="4.3" height="1.1" fill="#a2aa9a"/><rect x="13.2" y="24.0" width="2.3" height="1.1" fill="#a2aa9a"/><rect x="16.6" y="24.0" width="5.0" height="1.1" fill="#a2aa9a"/><rect x="22.4" y="24.0" width="3.1" height="1.1" fill="#98a090"/><rect x="25.8" y="24.0" width="3.3" height="1.1" fill="#98a090"/><rect x="30.1" y="24.0" width="5.9" height="1.1" fill="#a2aa9a"/><rect x="36.3" y="24.0" width="2.9" height="1.1" fill="#a8b0a0"/><rect x="40.3" y="24.0" width="4.7" height="1.1" fill="#a8b0a0"/><rect x="45.8" y="24.0" width="3.0" height="1.1" fill="#646c60"/><rect x="49.0" y="24.0" width="2.8" height="1.1" fill="#a2aa9a"/><rect x="52.3" y="24.0" width="4.4" height="1.1" fill="#646c60"/><rect x="57.3" y="24.0" width="3.4" height="1.1" fill="#646c60"/><rect x="-2.7" y="24.0" width="3.4" height="1.1" fill="#646c60"/><rect x="-1.0" y="26.0" width="2.2" height="1.1" fill="#a2aa9a"/><rect x="59.0" y="26.0" width="2.2" height="1.1" fill="#a2aa9a"/><rect x="1.6" y="26.0" width="3.2" height="1.1" fill="#6a7266"/><rect x="5.5" y="26.0" width="2.8" height="1.1" fill="#98a090"/><rect x="9.1" y="26.0" width="3.5" height="1.1" fill="#98a090"/><rect x="13.5" y="26.0" width="5.8" height="1.1" fill="#a2aa9a"/><rect x="20.4" y="26.0" width="2.7" height="1.1" fill="#98a090"/><rect x="23.4" y="26.0" width="2.1" height="1.1" fill="#a2aa9a"/><rect x="25.9" y="26.0" width="4.8" height="1.1" fill="#6a7266"/><rect x="31.8" y="26.0" width="4.0" height="1.1" fill="#a8b0a0"/><rect x="36.9" y="26.0" width="5.2" height="1.1" fill="#646c60"/><rect x="42.3" y="26.0" width="6.0" height="1.1" fill="#98a090"/><rect x="48.8" y="26.0" width="3.4" height="1.1" fill="#646c60"/><rect x="53.1" y="26.0" width="3.8" height="1.1" fill="#646c60"/><rect x="57.2" y="26.0" width="3.3" height="1.1" fill="#98a090"/><rect x="-2.8" y="26.0" width="3.3" height="1.1" fill="#98a090"/><rect x="-0.4" y="28.0" width="3.9" height="1.1" fill="#98a090"/><rect x="59.6" y="28.0" width="3.9" height="1.1" fill="#98a090"/><rect x="3.6" y="28.0" width="5.3" height="1.1" fill="#a2aa9a"/><rect x="9.6" y="28.0" width="4.4" height="1.1" fill="#a8b0a0"/><rect x="14.5" y="28.0" width="2.9" height="1.1" fill="#98a090"/><rect x="17.6" y="28.0" width="2.2" height="1.1" fill="#a2aa9a"/><rect x="20.5" y="28.0" width="2.9" height="1.1" fill="#6a7266"/><rect x="24.1" y="28.0" width="3.5" height="1.1" fill="#6a7266"/><rect x="28.7" y="28.0" width="5.3" height="1.1" fill="#98a090"/><rect x="35.1" y="28.0" width="3.0" height="1.1" fill="#6a7266"/><rect x="39.3" y="28.0" width="2.1" height="1.1" fill="#a2aa9a"/><rect x="41.9" y="28.0" width="5.5" height="1.1" fill="#a2aa9a"/><rect x="47.9" y="28.0" width="5.3" height="1.1" fill="#a8b0a0"/><rect x="54.3" y="28.0" width="4.4" height="1.1" fill="#a2aa9a"/><rect x="58.9" y="28.0" width="4.8" height="1.1" fill="#98a090"/><rect x="-1.1" y="28.0" width="4.8" height="1.1" fill="#98a090"/></pattern>
<pattern id="stemTex" width="24" height="12" patternUnits="userSpaceOnUse"><rect width="24" height="12" fill="#959d90"/><rect x="-1.5" y="0.0" width="16.9" height="1.0" fill="#a0a898"/><rect x="22.5" y="0.0" width="16.9" height="1.0" fill="#a0a898"/><rect x="16.3" y="0.0" width="16.9" height="1.0" fill="#a0a898"/><rect x="-7.7" y="0.0" width="16.9" height="1.0" fill="#a0a898"/><rect x="-2.1" y="2.0" width="19.3" height="1.0" fill="#a0a898"/><rect x="21.9" y="2.0" width="19.3" height="1.0" fill="#a0a898"/><rect x="17.2" y="2.0" width="9.9" height="1.0" fill="#868e81"/><rect x="-6.8" y="2.0" width="9.9" height="1.0" fill="#868e81"/><rect x="-3.0" y="4.0" width="14.5" height="1.0" fill="#a0a898"/><rect x="21.0" y="4.0" width="14.5" height="1.0" fill="#a0a898"/><rect x="11.8" y="4.0" width="16.8" height="1.0" fill="#868e81"/><rect x="-12.2" y="4.0" width="16.8" height="1.0" fill="#868e81"/><rect x="-0.3" y="6.0" width="17.2" height="1.0" fill="#a8b0a1"/><rect x="23.7" y="6.0" width="17.2" height="1.0" fill="#a8b0a1"/><rect x="17.6" y="6.0" width="8.9" height="1.0" fill="#a0a898"/><rect x="-6.4" y="6.0" width="8.9" height="1.0" fill="#a0a898"/><rect x="-3.5" y="8.0" width="8.0" height="1.0" fill="#a8b0a1"/><rect x="20.5" y="8.0" width="8.0" height="1.0" fill="#a8b0a1"/><rect x="4.7" y="8.0" width="10.6" height="1.0" fill="#a8b0a1"/><rect x="16.2" y="8.0" width="11.5" height="1.0" fill="#a8b0a1"/><rect x="-7.8" y="8.0" width="11.5" height="1.0" fill="#a8b0a1"/><rect x="-1.3" y="10.0" width="10.5" height="1.0" fill="#a0a898"/><rect x="22.7" y="10.0" width="10.5" height="1.0" fill="#a0a898"/><rect x="9.4" y="10.0" width="19.6" height="1.0" fill="#868e81"/><rect x="-14.6" y="10.0" width="19.6" height="1.0" fill="#868e81"/></pattern>
<pattern id="browTex" width="60" height="30" patternUnits="userSpaceOnUse"><rect width="60" height="30" fill="#46453f"/><rect x="-0.8" y="0.0" width="5.3" height="1.1" fill="#3c3b36"/><rect x="59.2" y="0.0" width="5.3" height="1.1" fill="#3c3b36"/><rect x="5.4" y="0.0" width="2.1" height="1.1" fill="#4e4d46"/><rect x="8.3" y="0.0" width="3.9" height="1.1" fill="#3a3934"/><rect x="12.6" y="0.0" width="2.1" height="1.1" fill="#3c3b36"/><rect x="15.6" y="0.0" width="4.9" height="1.1" fill="#3c3b36"/><rect x="21.6" y="0.0" width="4.2" height="1.1" fill="#504f48"/><rect x="26.0" y="0.0" width="4.2" height="1.1" fill="#3a3934"/><rect x="31.0" y="0.0" width="4.4" height="1.1" fill="#504f48"/><rect x="36.5" y="0.0" width="3.3" height="1.1" fill="#504f48"/><rect x="40.3" y="0.0" width="3.6" height="1.1" fill="#3a3934"/><rect x="44.4" y="0.0" width="2.4" height="1.1" fill="#4e4d46"/><rect x="47.7" y="0.0" width="5.2" height="1.1" fill="#504f48"/><rect x="54.0" y="0.0" width="4.4" height="1.1" fill="#4e4d46"/><rect x="59.3" y="0.0" width="5.7" height="1.1" fill="#3c3b36"/><rect x="-0.7" y="0.0" width="5.7" height="1.1" fill="#3c3b36"/><rect x="-0.4" y="2.0" width="4.1" height="1.1" fill="#504f48"/><rect x="59.6" y="2.0" width="4.1" height="1.1" fill="#504f48"/><rect x="4.5" y="2.0" width="3.0" height="1.1" fill="#3c3b36"/><rect x="7.8" y="2.0" width="4.4" height="1.1" fill="#504f48"/><rect x="12.8" y="2.0" width="4.7" height="1.1" fill="#4e4d46"/><rect x="17.6" y="2.0" width="4.7" height="1.1" fill="#3a3934"/><rect x="23.1" y="2.0" width="3.5" height="1.1" fill="#4e4d46"/><rect x="26.8" y="2.0" width="2.8" height="1.1" fill="#504f48"/><rect x="29.9" y="2.0" width="2.7" height="1.1" fill="#3a3934"/><rect x="33.2" y="2.0" width="4.7" height="1.1" fill="#3a3934"/><rect x="38.4" y="2.0" width="4.1" height="1.1" fill="#3a3934"/><rect x="42.6" y="2.0" width="6.0" height="1.1" fill="#504f48"/><rect x="48.8" y="2.0" width="4.4" height="1.1" fill="#3c3b36"/><rect x="53.3" y="2.0" width="3.8" height="1.1" fill="#504f48"/><rect x="58.2" y="2.0" width="4.7" height="1.1" fill="#3c3b36"/><rect x="-1.8" y="2.0" width="4.7" height="1.1" fill="#3c3b36"/><rect x="-0.7" y="4.0" width="5.2" height="1.1" fill="#3c3b36"/><rect x="59.3" y="4.0" width="5.2" height="1.1" fill="#3c3b36"/><rect x="5.1" y="4.0" width="4.8" height="1.1" fill="#3c3b36"/><rect x="11.0" y="4.0" width="2.8" height="1.1" fill="#3a3934"/><rect x="14.3" y="4.0" width="4.9" height="1.1" fill="#4e4d46"/><rect x="19.2" y="4.0" width="4.2" height="1.1" fill="#3a3934"/><rect x="24.1" y="4.0" width="3.4" height="1.1" fill="#3a3934"/><rect x="28.2" y="4.0" width="3.3" height="1.1" fill="#3a3934"/><rect x="32.7" y="4.0" width="5.7" height="1.1" fill="#3c3b36"/><rect x="39.1" y="4.0" width="3.1" height="1.1" fill="#3c3b36"/><rect x="43.0" y="4.0" width="4.0" height="1.1" fill="#3c3b36"/><rect x="47.5" y="4.0" width="4.5" height="1.1" fill="#3c3b36"/><rect x="52.4" y="4.0" width="4.6" height="1.1" fill="#3c3b36"/><rect x="57.9" y="4.0" width="3.1" height="1.1" fill="#3c3b36"/><rect x="-2.1" y="4.0" width="3.1" height="1.1" fill="#3c3b36"/><rect x="-1.1" y="6.0" width="2.6" height="1.1" fill="#3a3934"/><rect x="58.9" y="6.0" width="2.6" height="1.1" fill="#3a3934"/><rect x="2.2" y="6.0" width="4.5" height="1.1" fill="#504f48"/><rect x="6.9" y="6.0" width="4.4" height="1.1" fill="#504f48"/><rect x="12.2" y="6.0" width="3.5" height="1.1" fill="#3c3b36"/><rect x="16.7" y="6.0" width="2.2" height="1.1" fill="#4e4d46"/><rect x="19.1" y="6.0" width="3.1" height="1.1" fill="#504f48"/><rect x="22.7" y="6.0" width="5.1" height="1.1" fill="#3c3b36"/><rect x="27.9" y="6.0" width="2.9" height="1.1" fill="#3a3934"/><rect x="31.3" y="6.0" width="2.6" height="1.1" fill="#4e4d46"/><rect x="34.6" y="6.0" width="2.6" height="1.1" fill="#504f48"/><rect x="38.0" y="6.0" width="2.2" height="1.1" fill="#3c3b36"/><rect x="40.8" y="6.0" width="5.6" height="1.1" fill="#504f48"/><rect x="47.2" y="6.0" width="2.5" height="1.1" fill="#504f48"/><rect x="49.9" y="6.0" width="4.5" height="1.1" fill="#3a3934"/><rect x="55.5" y="6.0" width="5.6" height="1.1" fill="#3c3b36"/><rect x="-4.5" y="6.0" width="5.6" height="1.1" fill="#3c3b36"/><rect x="-3.9" y="8.0" width="4.5" height="1.1" fill="#4e4d46"/><rect x="56.1" y="8.0" width="4.5" height="1.1" fill="#4e4d46"/><rect x="1.7" y="8.0" width="3.8" height="1.1" fill="#3c3b36"/><rect x="6.0" y="8.0" width="3.1" height="1.1" fill="#504f48"/><rect x="10.1" y="8.0" width="3.2" height="1.1" fill="#3a3934"/><rect x="13.6" y="8.0" width="5.8" height="1.1" fill="#504f48"/><rect x="20.0" y="8.0" width="3.1" height="1.1" fill="#3a3934"/><rect x="24.3" y="8.0" width="3.7" height="1.1" fill="#3a3934"/><rect x="28.0" y="8.0" width="2.3" height="1.1" fill="#4e4d46"/><rect x="31.0" y="8.0" width="2.1" height="1.1" fill="#4e4d46"/><rect x="33.5" y="8.0" width="2.1" height="1.1" fill="#4e4d46"/><rect x="36.5" y="8.0" width="3.4" height="1.1" fill="#504f48"/><rect x="40.1" y="8.0" width="4.7" height="1.1" fill="#3c3b36"/><rect x="45.4" y="8.0" width="3.9" height="1.1" fill="#3c3b36"/><rect x="50.1" y="8.0" width="2.5" height="1.1" fill="#3a3934"/><rect x="53.2" y="8.0" width="2.1" height="1.1" fill="#4e4d46"/><rect x="55.5" y="8.0" width="5.0" height="1.1" fill="#3c3b36"/><rect x="-4.5" y="8.0" width="5.0" height="1.1" fill="#3c3b36"/><rect x="-0.2" y="10.0" width="4.8" height="1.1" fill="#4e4d46"/><rect x="59.8" y="10.0" width="4.8" height="1.1" fill="#4e4d46"/><rect x="5.1" y="10.0" width="2.7" height="1.1" fill="#3a3934"/><rect x="8.9" y="10.0" width="4.2" height="1.1" fill="#504f48"/><rect x="14.1" y="10.0" width="4.3" height="1.1" fill="#4e4d46"/><rect x="19.3" y="10.0" width="5.4" height="1.1" fill="#3c3b36"/><rect x="24.7" y="10.0" width="5.4" height="1.1" fill="#4e4d46"/><rect x="31.0" y="10.0" width="4.6" height="1.1" fill="#3a3934"/><rect x="35.9" y="10.0" width="2.7" height="1.1" fill="#4e4d46"/><rect x="38.8" y="10.0" width="4.5" height="1.1" fill="#3c3b36"/><rect x="43.4" y="10.0" width="2.0" height="1.1" fill="#3c3b36"/><rect x="46.4" y="10.0" width="2.5" height="1.1" fill="#504f48"/><rect x="49.6" y="10.0" width="4.4" height="1.1" fill="#504f48"/><rect x="54.7" y="10.0" width="5.1" height="1.1" fill="#4e4d46"/><rect x="-1.2" y="12.0" width="5.8" height="1.1" fill="#504f48"/><rect x="58.8" y="12.0" width="5.8" height="1.1" fill="#504f48"/><rect x="5.1" y="12.0" width="4.9" height="1.1" fill="#504f48"/><rect x="10.2" y="12.0" width="4.6" height="1.1" fill="#504f48"/><rect x="16.0" y="12.0" width="4.8" height="1.1" fill="#4e4d46"/><rect x="20.9" y="12.0" width="5.7" height="1.1" fill="#3c3b36"/><rect x="27.3" y="12.0" width="3.1" height="1.1" fill="#3c3b36"/><rect x="30.8" y="12.0" width="5.3" height="1.1" fill="#4e4d46"/><rect x="36.4" y="12.0" width="2.1" height="1.1" fill="#3a3934"/><rect x="39.4" y="12.0" width="2.4" height="1.1" fill="#504f48"/><rect x="42.2" y="12.0" width="4.8" height="1.1" fill="#4e4d46"/><rect x="48.1" y="12.0" width="2.1" height="1.1" fill="#3a3934"/><rect x="50.7" y="12.0" width="5.3" height="1.1" fill="#504f48"/><rect x="56.4" y="12.0" width="2.1" height="1.1" fill="#3a3934"/><rect x="58.6" y="12.0" width="2.0" height="1.1" fill="#3a3934"/><rect x="-1.4" y="12.0" width="2.0" height="1.1" fill="#3a3934"/><rect x="-1.6" y="14.0" width="3.1" height="1.1" fill="#4e4d46"/><rect x="58.4" y="14.0" width="3.1" height="1.1" fill="#4e4d46"/><rect x="1.6" y="14.0" width="4.2" height="1.1" fill="#4e4d46"/><rect x="7.0" y="14.0" width="3.5" height="1.1" fill="#3c3b36"/><rect x="11.2" y="14.0" width="4.5" height="1.1" fill="#3c3b36"/><rect x="16.8" y="14.0" width="3.0" height="1.1" fill="#3a3934"/><rect x="20.9" y="14.0" width="2.8" height="1.1" fill="#3c3b36"/><rect x="23.8" y="14.0" width="2.7" height="1.1" fill="#504f48"/><rect x="27.6" y="14.0" width="5.2" height="1.1" fill="#4e4d46"/><rect x="33.0" y="14.0" width="4.4" height="1.1" fill="#3c3b36"/><rect x="37.9" y="14.0" width="5.5" height="1.1" fill="#3c3b36"/><rect x="43.7" y="14.0" width="4.6" height="1.1" fill="#3c3b36"/><rect x="48.4" y="14.0" width="5.7" height="1.1" fill="#504f48"/><rect x="54.5" y="14.0" width="3.0" height="1.1" fill="#4e4d46"/><rect x="57.9" y="14.0" width="4.4" height="1.1" fill="#3a3934"/><rect x="-2.1" y="14.0" width="4.4" height="1.1" fill="#3a3934"/><rect x="-0.9" y="16.0" width="2.7" height="1.1" fill="#3c3b36"/><rect x="59.1" y="16.0" width="2.7" height="1.1" fill="#3c3b36"/><rect x="2.6" y="16.0" width="5.1" height="1.1" fill="#504f48"/><rect x="7.9" y="16.0" width="3.6" height="1.1" fill="#4e4d46"/><rect x="12.2" y="16.0" width="5.8" height="1.1" fill="#3c3b36"/><rect x="19.1" y="16.0" width="5.5" height="1.1" fill="#3a3934"/><rect x="25.6" y="16.0" width="4.4" height="1.1" fill="#3a3934"/><rect x="30.8" y="16.0" width="5.2" height="1.1" fill="#504f48"/><rect x="36.3" y="16.0" width="2.2" height="1.1" fill="#4e4d46"/><rect x="39.4" y="16.0" width="4.0" height="1.1" fill="#504f48"/><rect x="43.5" y="16.0" width="5.3" height="1.1" fill="#504f48"/><rect x="49.1" y="16.0" width="3.4" height="1.1" fill="#4e4d46"/><rect x="52.7" y="16.0" width="2.7" height="1.1" fill="#4e4d46"/><rect x="56.5" y="16.0" width="5.0" height="1.1" fill="#3c3b36"/><rect x="-3.5" y="16.0" width="5.0" height="1.1" fill="#3c3b36"/><rect x="-1.1" y="18.0" width="2.5" height="1.1" fill="#4e4d46"/><rect x="58.9" y="18.0" width="2.5" height="1.1" fill="#4e4d46"/><rect x="2.1" y="18.0" width="4.9" height="1.1" fill="#3a3934"/><rect x="7.8" y="18.0" width="5.6" height="1.1" fill="#3a3934"/><rect x="14.4" y="18.0" width="2.2" height="1.1" fill="#504f48"/><rect x="17.2" y="18.0" width="4.5" height="1.1" fill="#3a3934"/><rect x="21.8" y="18.0" width="3.1" height="1.1" fill="#504f48"/><rect x="25.4" y="18.0" width="4.5" height="1.1" fill="#504f48"/><rect x="30.7" y="18.0" width="5.4" height="1.1" fill="#4e4d46"/><rect x="37.2" y="18.0" width="2.6" height="1.1" fill="#3c3b36"/><rect x="40.6" y="18.0" width="5.2" height="1.1" fill="#4e4d46"/><rect x="45.9" y="18.0" width="3.8" height="1.1" fill="#504f48"/><rect x="50.8" y="18.0" width="5.8" height="1.1" fill="#4e4d46"/><rect x="57.4" y="18.0" width="3.9" height="1.1" fill="#504f48"/><rect x="-2.6" y="18.0" width="3.9" height="1.1" fill="#504f48"/><rect x="-2.4" y="20.0" width="2.8" height="1.1" fill="#4e4d46"/><rect x="57.6" y="20.0" width="2.8" height="1.1" fill="#4e4d46"/><rect x="0.9" y="20.0" width="3.0" height="1.1" fill="#3a3934"/><rect x="4.3" y="20.0" width="4.8" height="1.1" fill="#3a3934"/><rect x="9.6" y="20.0" width="5.9" height="1.1" fill="#504f48"/><rect x="16.1" y="20.0" width="3.0" height="1.1" fill="#504f48"/><rect x="19.7" y="20.0" width="5.3" height="1.1" fill="#3a3934"/><rect x="25.2" y="20.0" width="2.1" height="1.1" fill="#504f48"/><rect x="28.4" y="20.0" width="4.3" height="1.1" fill="#4e4d46"/><rect x="32.9" y="20.0" width="2.2" height="1.1" fill="#3a3934"/><rect x="35.9" y="20.0" width="5.5" height="1.1" fill="#4e4d46"/><rect x="42.3" y="20.0" width="2.7" height="1.1" fill="#504f48"/><rect x="45.1" y="20.0" width="5.5" height="1.1" fill="#3a3934"/><rect x="51.3" y="20.0" width="3.4" height="1.1" fill="#3c3b36"/><rect x="55.8" y="20.0" width="2.9" height="1.1" fill="#3c3b36"/><rect x="59.8" y="20.0" width="4.5" height="1.1" fill="#504f48"/><rect x="-0.2" y="20.0" width="4.5" height="1.1" fill="#504f48"/><rect x="-3.6" y="22.0" width="3.7" height="1.1" fill="#4e4d46"/><rect x="56.4" y="22.0" width="3.7" height="1.1" fill="#4e4d46"/><rect x="0.8" y="22.0" width="3.1" height="1.1" fill="#504f48"/><rect x="4.5" y="22.0" width="4.6" height="1.1" fill="#3a3934"/><rect x="9.7" y="22.0" width="4.6" height="1.1" fill="#3a3934"/><rect x="14.6" y="22.0" width="3.7" height="1.1" fill="#3a3934"/><rect x="18.4" y="22.0" width="5.1" height="1.1" fill="#3c3b36"/><rect x="24.5" y="22.0" width="2.6" height="1.1" fill="#3a3934"/><rect x="27.3" y="22.0" width="4.0" height="1.1" fill="#504f48"/><rect x="31.4" y="22.0" width="2.4" height="1.1" fill="#3c3b36"/><rect x="34.3" y="22.0" width="2.4" height="1.1" fill="#3a3934"/><rect x="37.1" y="22.0" width="2.3" height="1.1" fill="#3a3934"/><rect x="39.8" y="22.0" width="3.6" height="1.1" fill="#504f48"/><rect x="44.3" y="22.0" width="3.1" height="1.1" fill="#3c3b36"/><rect x="48.0" y="22.0" width="3.0" height="1.1" fill="#3a3934"/><rect x="51.3" y="22.0" width="2.1" height="1.1" fill="#504f48"/><rect x="54.3" y="22.0" width="4.2" height="1.1" fill="#3c3b36"/><rect x="58.6" y="22.0" width="5.1" height="1.1" fill="#504f48"/><rect x="-1.4" y="22.0" width="5.1" height="1.1" fill="#504f48"/><rect x="-0.8" y="24.0" width="2.5" height="1.1" fill="#504f48"/><rect x="59.2" y="24.0" width="2.5" height="1.1" fill="#504f48"/><rect x="1.8" y="24.0" width="3.0" height="1.1" fill="#4e4d46"/><rect x="4.9" y="24.0" width="3.1" height="1.1" fill="#4e4d46"/><rect x="9.0" y="24.0" width="2.6" height="1.1" fill="#504f48"/><rect x="12.6" y="24.0" width="4.4" height="1.1" fill="#3c3b36"/><rect x="18.1" y="24.0" width="3.9" height="1.1" fill="#3c3b36"/><rect x="22.5" y="24.0" width="5.9" height="1.1" fill="#3c3b36"/><rect x="28.6" y="24.0" width="2.7" height="1.1" fill="#504f48"/><rect x="31.6" y="24.0" width="5.3" height="1.1" fill="#3c3b36"/><rect x="37.1" y="24.0" width="3.4" height="1.1" fill="#3a3934"/><rect x="41.2" y="24.0" width="4.4" height="1.1" fill="#4e4d46"/><rect x="46.3" y="24.0" width="2.9" height="1.1" fill="#504f48"/><rect x="49.7" y="24.0" width="3.6" height="1.1" fill="#504f48"/><rect x="54.4" y="24.0" width="2.1" height="1.1" fill="#3a3934"/><rect x="57.0" y="24.0" width="4.0" height="1.1" fill="#3a3934"/><rect x="-3.0" y="24.0" width="4.0" height="1.1" fill="#3a3934"/><rect x="-2.3" y="26.0" width="3.2" height="1.1" fill="#3a3934"/><rect x="57.7" y="26.0" width="3.2" height="1.1" fill="#3a3934"/><rect x="1.7" y="26.0" width="2.2" height="1.1" fill="#4e4d46"/><rect x="4.3" y="26.0" width="4.4" height="1.1" fill="#3c3b36"/><rect x="8.9" y="26.0" width="3.8" height="1.1" fill="#4e4d46"/><rect x="13.2" y="26.0" width="3.7" height="1.1" fill="#3c3b36"/><rect x="17.9" y="26.0" width="2.3" height="1.1" fill="#3c3b36"/><rect x="21.3" y="26.0" width="2.0" height="1.1" fill="#504f48"/><rect x="24.1" y="26.0" width="3.9" height="1.1" fill="#504f48"/><rect x="28.8" y="26.0" width="5.3" height="1.1" fill="#3a3934"/><rect x="35.3" y="26.0" width="2.6" height="1.1" fill="#4e4d46"/><rect x="38.5" y="26.0" width="2.3" height="1.1" fill="#504f48"/><rect x="40.9" y="26.0" width="5.3" height="1.1" fill="#4e4d46"/><rect x="46.9" y="26.0" width="4.1" height="1.1" fill="#3a3934"/><rect x="52.0" y="26.0" width="3.5" height="1.1" fill="#504f48"/><rect x="56.3" y="26.0" width="3.7" height="1.1" fill="#4e4d46"/><rect x="-0.9" y="28.0" width="2.2" height="1.1" fill="#4e4d46"/><rect x="59.1" y="28.0" width="2.2" height="1.1" fill="#4e4d46"/><rect x="1.3" y="28.0" width="2.2" height="1.1" fill="#504f48"/><rect x="4.0" y="28.0" width="2.4" height="1.1" fill="#3c3b36"/><rect x="7.0" y="28.0" width="5.7" height="1.1" fill="#3c3b36"/><rect x="13.0" y="28.0" width="3.5" height="1.1" fill="#4e4d46"/><rect x="16.7" y="28.0" width="2.2" height="1.1" fill="#4e4d46"/><rect x="19.9" y="28.0" width="3.1" height="1.1" fill="#4e4d46"/><rect x="23.4" y="28.0" width="3.5" height="1.1" fill="#3a3934"/><rect x="27.7" y="28.0" width="5.6" height="1.1" fill="#3a3934"/><rect x="34.3" y="28.0" width="5.0" height="1.1" fill="#504f48"/><rect x="39.8" y="28.0" width="2.8" height="1.1" fill="#504f48"/><rect x="43.5" y="28.0" width="4.6" height="1.1" fill="#504f48"/><rect x="49.1" y="28.0" width="5.8" height="1.1" fill="#504f48"/><rect x="55.8" y="28.0" width="2.5" height="1.1" fill="#4e4d46"/><rect x="58.9" y="28.0" width="5.0" height="1.1" fill="#3c3b36"/><rect x="-1.1" y="28.0" width="5.0" height="1.1" fill="#3c3b36"/></pattern>
<pattern id="mouthTex" width="60" height="30" patternUnits="userSpaceOnUse"><rect width="60" height="30" fill="#939b8e"/><rect x="57.3" y="0.0" width="2.6" height="1.1" fill="#a8b0a0"/><rect x="-0.0" y="0.0" width="4.1" height="1.1" fill="#7c8478"/><rect x="60.0" y="0.0" width="4.1" height="1.1" fill="#7c8478"/><rect x="4.8" y="0.0" width="5.6" height="1.1" fill="#acb4a4"/><rect x="10.5" y="0.0" width="3.7" height="1.1" fill="#a8b0a0"/><rect x="14.5" y="0.0" width="4.2" height="1.1" fill="#a8b0a0"/><rect x="19.7" y="0.0" width="2.5" height="1.1" fill="#acb4a4"/><rect x="23.0" y="0.0" width="4.3" height="1.1" fill="#a8b0a0"/><rect x="28.0" y="0.0" width="3.6" height="1.1" fill="#acb4a4"/><rect x="31.7" y="0.0" width="5.4" height="1.1" fill="#7c8478"/><rect x="37.6" y="0.0" width="4.2" height="1.1" fill="#9ca494"/><rect x="42.1" y="0.0" width="5.3" height="1.1" fill="#acb4a4"/><rect x="47.5" y="0.0" width="4.3" height="1.1" fill="#acb4a4"/><rect x="52.2" y="0.0" width="4.2" height="1.1" fill="#a8b0a0"/><rect x="57.1" y="0.0" width="4.5" height="1.1" fill="#848c80"/><rect x="-2.9" y="0.0" width="4.5" height="1.1" fill="#848c80"/><rect x="-2.3" y="2.0" width="3.3" height="1.1" fill="#9ca494"/><rect x="57.7" y="2.0" width="3.3" height="1.1" fill="#9ca494"/><rect x="2.1" y="2.0" width="3.4" height="1.1" fill="#acb4a4"/><rect x="6.5" y="2.0" width="4.8" height="1.1" fill="#acb4a4"/><rect x="11.4" y="2.0" width="3.2" height="1.1" fill="#848c80"/><rect x="15.6" y="2.0" width="4.9" height="1.1" fill="#7c8478"/><rect x="21.3" y="2.0" width="2.3" height="1.1" fill="#9ca494"/><rect x="24.1" y="2.0" width="5.0" height="1.1" fill="#acb4a4"/><rect x="30.2" y="2.0" width="3.7" height="1.1" fill="#a8b0a0"/><rect x="34.8" y="2.0" width="4.3" height="1.1" fill="#7c8478"/><rect x="39.5" y="2.0" width="3.4" height="1.1" fill="#848c80"/><rect x="43.6" y="2.0" width="3.8" height="1.1" fill="#a8b0a0"/><rect x="48.6" y="2.0" width="3.9" height="1.1" fill="#a8b0a0"/><rect x="52.5" y="2.0" width="4.8" height="1.1" fill="#9ca494"/><rect x="58.5" y="2.0" width="5.3" height="1.1" fill="#7c8478"/><rect x="-1.5" y="2.0" width="5.3" height="1.1" fill="#7c8478"/><rect x="-0.5" y="4.0" width="3.4" height="1.1" fill="#848c80"/><rect x="59.5" y="4.0" width="3.4" height="1.1" fill="#848c80"/><rect x="3.4" y="4.0" width="4.4" height="1.1" fill="#848c80"/><rect x="7.9" y="4.0" width="5.1" height="1.1" fill="#acb4a4"/><rect x="13.8" y="4.0" width="3.6" height="1.1" fill="#848c80"/><rect x="17.5" y="4.0" width="3.8" height="1.1" fill="#9ca494"/><rect x="21.7" y="4.0" width="2.5" height="1.1" fill="#848c80"/><rect x="25.2" y="4.0" width="3.1" height="1.1" fill="#848c80"/><rect x="29.5" y="4.0" width="4.7" height="1.1" fill="#848c80"/><rect x="35.4" y="4.0" width="2.6" height="1.1" fill="#acb4a4"/><rect x="38.2" y="4.0" width="4.6" height="1.1" fill="#a8b0a0"/><rect x="43.4" y="4.0" width="4.4" height="1.1" fill="#7c8478"/><rect x="48.1" y="4.0" width="2.6" height="1.1" fill="#9ca494"/><rect x="51.1" y="4.0" width="4.3" height="1.1" fill="#acb4a4"/><rect x="56.2" y="4.0" width="4.1" height="1.1" fill="#9ca494"/><rect x="-3.8" y="4.0" width="4.1" height="1.1" fill="#9ca494"/><rect x="-1.0" y="6.0" width="3.8" height="1.1" fill="#9ca494"/><rect x="59.0" y="6.0" width="3.8" height="1.1" fill="#9ca494"/><rect x="3.3" y="6.0" width="3.6" height="1.1" fill="#a8b0a0"/><rect x="7.4" y="6.0" width="3.6" height="1.1" fill="#acb4a4"/><rect x="11.1" y="6.0" width="2.8" height="1.1" fill="#acb4a4"/><rect x="14.1" y="6.0" width="4.4" height="1.1" fill="#a8b0a0"/><rect x="18.5" y="6.0" width="2.6" height="1.1" fill="#a8b0a0"/><rect x="22.2" y="6.0" width="4.5" height="1.1" fill="#a8b0a0"/><rect x="27.7" y="6.0" width="4.5" height="1.1" fill="#acb4a4"/><rect x="32.9" y="6.0" width="5.8" height="1.1" fill="#9ca494"/><rect x="39.2" y="6.0" width="2.5" height="1.1" fill="#848c80"/><rect x="42.9" y="6.0" width="3.9" height="1.1" fill="#848c80"/><rect x="47.1" y="6.0" width="2.6" height="1.1" fill="#7c8478"/><rect x="50.6" y="6.0" width="3.9" height="1.1" fill="#acb4a4"/><rect x="55.1" y="6.0" width="2.8" height="1.1" fill="#9ca494"/><rect x="58.4" y="6.0" width="4.8" height="1.1" fill="#a8b0a0"/><rect x="-1.6" y="6.0" width="4.8" height="1.1" fill="#a8b0a0"/><rect x="-2.8" y="8.0" width="4.6" height="1.1" fill="#a8b0a0"/><rect x="57.2" y="8.0" width="4.6" height="1.1" fill="#a8b0a0"/><rect x="2.6" y="8.0" width="3.0" height="1.1" fill="#7c8478"/><rect x="6.7" y="8.0" width="3.4" height="1.1" fill="#acb4a4"/><rect x="10.8" y="8.0" width="5.1" height="1.1" fill="#7c8478"/><rect x="16.7" y="8.0" width="4.5" height="1.1" fill="#acb4a4"/><rect x="22.1" y="8.0" width="5.3" height="1.1" fill="#acb4a4"/><rect x="27.6" y="8.0" width="4.0" height="1.1" fill="#a8b0a0"/><rect x="32.8" y="8.0" width="5.2" height="1.1" fill="#848c80"/><rect x="38.2" y="8.0" width="4.8" height="1.1" fill="#7c8478"/><rect x="43.5" y="8.0" width="5.7" height="1.1" fill="#7c8478"/><rect x="50.4" y="8.0" width="3.5" height="1.1" fill="#acb4a4"/><rect x="54.0" y="8.0" width="3.9" height="1.1" fill="#7c8478"/><rect x="58.1" y="8.0" width="4.5" height="1.1" fill="#9ca494"/><rect x="-1.9" y="8.0" width="4.5" height="1.1" fill="#9ca494"/><rect x="-2.1" y="10.0" width="4.6" height="1.1" fill="#a8b0a0"/><rect x="57.9" y="10.0" width="4.6" height="1.1" fill="#a8b0a0"/><rect x="3.5" y="10.0" width="2.5" height="1.1" fill="#848c80"/><rect x="6.9" y="10.0" width="5.0" height="1.1" fill="#848c80"/><rect x="13.0" y="10.0" width="3.7" height="1.1" fill="#7c8478"/><rect x="16.9" y="10.0" width="5.8" height="1.1" fill="#848c80"/><rect x="23.2" y="10.0" width="5.0" height="1.1" fill="#a8b0a0"/><rect x="29.0" y="10.0" width="2.7" height="1.1" fill="#acb4a4"/><rect x="31.8" y="10.0" width="4.4" height="1.1" fill="#848c80"/><rect x="37.1" y="10.0" width="2.6" height="1.1" fill="#9ca494"/><rect x="40.8" y="10.0" width="4.6" height="1.1" fill="#7c8478"/><rect x="45.7" y="10.0" width="4.2" height="1.1" fill="#a8b0a0"/><rect x="49.9" y="10.0" width="5.9" height="1.1" fill="#a8b0a0"/><rect x="56.4" y="10.0" width="5.7" height="1.1" fill="#848c80"/><rect x="-3.6" y="10.0" width="5.7" height="1.1" fill="#848c80"/><rect x="-3.2" y="12.0" width="5.5" height="1.1" fill="#a8b0a0"/><rect x="56.8" y="12.0" width="5.5" height="1.1" fill="#a8b0a0"/><rect x="2.6" y="12.0" width="3.2" height="1.1" fill="#acb4a4"/><rect x="6.7" y="12.0" width="3.3" height="1.1" fill="#9ca494"/><rect x="10.5" y="12.0" width="2.5" height="1.1" fill="#7c8478"/><rect x="14.1" y="12.0" width="4.6" height="1.1" fill="#9ca494"/><rect x="19.2" y="12.0" width="5.7" height="1.1" fill="#9ca494"/><rect x="25.1" y="12.0" width="2.6" height="1.1" fill="#9ca494"/><rect x="27.7" y="12.0" width="3.8" height="1.1" fill="#acb4a4"/><rect x="32.2" y="12.0" width="5.1" height="1.1" fill="#acb4a4"/><rect x="37.5" y="12.0" width="3.9" height="1.1" fill="#a8b0a0"/><rect x="42.0" y="12.0" width="3.3" height="1.1" fill="#9ca494"/><rect x="46.0" y="12.0" width="3.9" height="1.1" fill="#a8b0a0"/><rect x="51.0" y="12.0" width="2.2" height="1.1" fill="#acb4a4"/><rect x="53.5" y="12.0" width="5.1" height="1.1" fill="#9ca494"/><rect x="59.2" y="12.0" width="2.1" height="1.1" fill="#a8b0a0"/><rect x="-0.8" y="12.0" width="2.1" height="1.1" fill="#a8b0a0"/><rect x="-1.5" y="14.0" width="4.0" height="1.1" fill="#9ca494"/><rect x="58.5" y="14.0" width="4.0" height="1.1" fill="#9ca494"/><rect x="2.7" y="14.0" width="3.1" height="1.1" fill="#9ca494"/><rect x="6.5" y="14.0" width="3.9" height="1.1" fill="#acb4a4"/><rect x="11.2" y="14.0" width="5.5" height="1.1" fill="#7c8478"/><rect x="17.8" y="14.0" width="5.6" height="1.1" fill="#acb4a4"/><rect x="24.4" y="14.0" width="2.5" height="1.1" fill="#a8b0a0"/><rect x="27.4" y="14.0" width="3.3" height="1.1" fill="#acb4a4"/><rect x="31.2" y="14.0" width="2.9" height="1.1" fill="#7c8478"/><rect x="35.0" y="14.0" width="5.6" height="1.1" fill="#acb4a4"/><rect x="41.7" y="14.0" width="4.6" height="1.1" fill="#7c8478"/><rect x="46.5" y="14.0" width="5.5" height="1.1" fill="#848c80"/><rect x="52.2" y="14.0" width="5.8" height="1.1" fill="#848c80"/><rect x="59.1" y="14.0" width="2.7" height="1.1" fill="#acb4a4"/><rect x="-0.9" y="14.0" width="2.7" height="1.1" fill="#acb4a4"/><rect x="-2.3" y="16.0" width="4.1" height="1.1" fill="#7c8478"/><rect x="57.7" y="16.0" width="4.1" height="1.1" fill="#7c8478"/><rect x="2.3" y="16.0" width="3.4" height="1.1" fill="#a8b0a0"/><rect x="6.6" y="16.0" width="2.1" height="1.1" fill="#9ca494"/><rect x="9.2" y="16.0" width="4.8" height="1.1" fill="#848c80"/><rect x="14.4" y="16.0" width="4.5" height="1.1" fill="#9ca494"/><rect x="20.1" y="16.0" width="2.5" height="1.1" fill="#acb4a4"/><rect x="23.7" y="16.0" width="2.4" height="1.1" fill="#7c8478"/><rect x="26.4" y="16.0" width="5.6" height="1.1" fill="#acb4a4"/><rect x="32.4" y="16.0" width="2.5" height="1.1" fill="#848c80"/><rect x="35.9" y="16.0" width="4.7" height="1.1" fill="#7c8478"/><rect x="41.1" y="16.0" width="4.1" height="1.1" fill="#9ca494"/><rect x="45.9" y="16.0" width="4.8" height="1.1" fill="#a8b0a0"/><rect x="51.1" y="16.0" width="5.2" height="1.1" fill="#acb4a4"/><rect x="56.8" y="16.0" width="2.3" height="1.1" fill="#a8b0a0"/><rect x="59.8" y="16.0" width="5.2" height="1.1" fill="#a8b0a0"/><rect x="-0.2" y="16.0" width="5.2" height="1.1" fill="#a8b0a0"/><rect x="56.9" y="18.0" width="3.1" height="1.1" fill="#a8b0a0"/><rect x="0.5" y="18.0" width="3.4" height="1.1" fill="#9ca494"/><rect x="4.3" y="18.0" width="5.7" height="1.1" fill="#9ca494"/><rect x="10.2" y="18.0" width="4.1" height="1.1" fill="#acb4a4"/><rect x="15.4" y="18.0" width="5.9" height="1.1" fill="#7c8478"/><rect x="21.3" y="18.0" width="2.8" height="1.1" fill="#7c8478"/><rect x="24.9" y="18.0" width="4.1" height="1.1" fill="#acb4a4"/><rect x="29.4" y="18.0" width="4.0" height="1.1" fill="#acb4a4"/><rect x="33.7" y="18.0" width="5.2" height="1.1" fill="#7c8478"/><rect x="39.0" y="18.0" width="2.1" height="1.1" fill="#9ca494"/><rect x="41.7" y="18.0" width="2.8" height="1.1" fill="#848c80"/><rect x="44.7" y="18.0" width="3.8" height="1.1" fill="#848c80"/><rect x="49.3" y="18.0" width="4.2" height="1.1" fill="#848c80"/><rect x="54.7" y="18.0" width="3.2" height="1.1" fill="#acb4a4"/><rect x="59.1" y="18.0" width="3.4" height="1.1" fill="#acb4a4"/><rect x="-0.9" y="18.0" width="3.4" height="1.1" fill="#acb4a4"/><rect x="57.4" y="20.0" width="2.2" height="1.1" fill="#acb4a4"/><rect x="-0.4" y="20.0" width="4.5" height="1.1" fill="#7c8478"/><rect x="59.6" y="20.0" width="4.5" height="1.1" fill="#7c8478"/><rect x="4.6" y="20.0" width="2.2" height="1.1" fill="#848c80"/><rect x="7.9" y="20.0" width="4.7" height="1.1" fill="#7c8478"/><rect x="13.3" y="20.0" width="4.8" height="1.1" fill="#a8b0a0"/><rect x="18.6" y="20.0" width="2.6" height="1.1" fill="#848c80"/><rect x="21.3" y="20.0" width="3.5" height="1.1" fill="#7c8478"/><rect x="25.9" y="20.0" width="4.2" height="1.1" fill="#acb4a4"/><rect x="30.1" y="20.0" width="5.5" height="1.1" fill="#acb4a4"/><rect x="36.1" y="20.0" width="2.0" height="1.1" fill="#848c80"/><rect x="38.2" y="20.0" width="3.1" height="1.1" fill="#acb4a4"/><rect x="41.6" y="20.0" width="5.1" height="1.1" fill="#a8b0a0"/><rect x="47.0" y="20.0" width="2.4" height="1.1" fill="#848c80"/><rect x="50.1" y="20.0" width="3.6" height="1.1" fill="#7c8478"/><rect x="54.0" y="20.0" width="2.9" height="1.1" fill="#9ca494"/><rect x="58.1" y="20.0" width="5.4" height="1.1" fill="#acb4a4"/><rect x="-1.9" y="20.0" width="5.4" height="1.1" fill="#acb4a4"/><rect x="-1.1" y="22.0" width="5.5" height="1.1" fill="#848c80"/><rect x="58.9" y="22.0" width="5.5" height="1.1" fill="#848c80"/><rect x="5.3" y="22.0" width="4.9" height="1.1" fill="#848c80"/><rect x="10.4" y="22.0" width="4.9" height="1.1" fill="#acb4a4"/><rect x="15.3" y="22.0" width="5.3" height="1.1" fill="#9ca494"/><rect x="21.4" y="22.0" width="4.9" height="1.1" fill="#9ca494"/><rect x="26.5" y="22.0" width="4.1" height="1.1" fill="#9ca494"/><rect x="31.3" y="22.0" width="5.3" height="1.1" fill="#a8b0a0"/><rect x="37.5" y="22.0" width="4.3" height="1.1" fill="#acb4a4"/><rect x="42.0" y="22.0" width="2.2" height="1.1" fill="#7c8478"/><rect x="45.3" y="22.0" width="3.5" height="1.1" fill="#848c80"/><rect x="49.5" y="22.0" width="4.5" height="1.1" fill="#9ca494"/><rect x="54.8" y="22.0" width="4.0" height="1.1" fill="#a8b0a0"/><rect x="59.3" y="22.0" width="2.3" height="1.1" fill="#9ca494"/><rect x="-0.7" y="22.0" width="2.3" height="1.1" fill="#9ca494"/><rect x="-3.6" y="24.0" width="4.1" height="1.1" fill="#848c80"/><rect x="56.4" y="24.0" width="4.1" height="1.1" fill="#848c80"/><rect x="0.8" y="24.0" width="2.3" height="1.1" fill="#7c8478"/><rect x="3.4" y="24.0" width="5.0" height="1.1" fill="#acb4a4"/><rect x="9.3" y="24.0" width="5.9" height="1.1" fill="#848c80"/><rect x="16.2" y="24.0" width="2.3" height="1.1" fill="#7c8478"/><rect x="19.4" y="24.0" width="4.5" height="1.1" fill="#acb4a4"/><rect x="24.0" y="24.0" width="2.6" height="1.1" fill="#7c8478"/><rect x="27.3" y="24.0" width="4.8" height="1.1" fill="#9ca494"/><rect x="32.8" y="24.0" width="2.0" height="1.1" fill="#a8b0a0"/><rect x="35.4" y="24.0" width="5.9" height="1.1" fill="#a8b0a0"/><rect x="42.2" y="24.0" width="4.7" height="1.1" fill="#7c8478"/><rect x="47.7" y="24.0" width="3.1" height="1.1" fill="#848c80"/><rect x="51.4" y="24.0" width="2.5" height="1.1" fill="#9ca494"/><rect x="54.1" y="24.0" width="5.9" height="1.1" fill="#848c80"/><rect x="-5.9" y="24.0" width="5.9" height="1.1" fill="#848c80"/><rect x="-2.2" y="26.0" width="5.3" height="1.1" fill="#848c80"/><rect x="57.8" y="26.0" width="5.3" height="1.1" fill="#848c80"/><rect x="4.3" y="26.0" width="3.5" height="1.1" fill="#acb4a4"/><rect x="7.9" y="26.0" width="2.4" height="1.1" fill="#9ca494"/><rect x="10.6" y="26.0" width="3.4" height="1.1" fill="#9ca494"/><rect x="15.0" y="26.0" width="4.0" height="1.1" fill="#a8b0a0"/><rect x="19.9" y="26.0" width="2.9" height="1.1" fill="#848c80"/><rect x="23.3" y="26.0" width="2.6" height="1.1" fill="#848c80"/><rect x="26.8" y="26.0" width="3.6" height="1.1" fill="#acb4a4"/><rect x="30.9" y="26.0" width="3.5" height="1.1" fill="#a8b0a0"/><rect x="35.4" y="26.0" width="2.0" height="1.1" fill="#7c8478"/><rect x="38.4" y="26.0" width="2.5" height="1.1" fill="#acb4a4"/><rect x="41.8" y="26.0" width="5.6" height="1.1" fill="#7c8478"/><rect x="47.7" y="26.0" width="2.3" height="1.1" fill="#848c80"/><rect x="51.1" y="26.0" width="4.4" height="1.1" fill="#7c8478"/><rect x="56.6" y="26.0" width="5.0" height="1.1" fill="#a8b0a0"/><rect x="-3.4" y="26.0" width="5.0" height="1.1" fill="#a8b0a0"/><rect x="-3.8" y="28.0" width="4.6" height="1.1" fill="#acb4a4"/><rect x="56.2" y="28.0" width="4.6" height="1.1" fill="#acb4a4"/><rect x="1.2" y="28.0" width="3.1" height="1.1" fill="#9ca494"/><rect x="4.6" y="28.0" width="5.1" height="1.1" fill="#848c80"/><rect x="10.7" y="28.0" width="5.2" height="1.1" fill="#848c80"/><rect x="17.1" y="28.0" width="5.8" height="1.1" fill="#9ca494"/><rect x="23.1" y="28.0" width="2.3" height="1.1" fill="#848c80"/><rect x="26.0" y="28.0" width="5.0" height="1.1" fill="#7c8478"/><rect x="31.6" y="28.0" width="5.6" height="1.1" fill="#9ca494"/><rect x="37.4" y="28.0" width="3.9" height="1.1" fill="#7c8478"/><rect x="41.6" y="28.0" width="3.0" height="1.1" fill="#7c8478"/><rect x="45.1" y="28.0" width="3.0" height="1.1" fill="#848c80"/><rect x="48.7" y="28.0" width="3.6" height="1.1" fill="#acb4a4"/><rect x="53.1" y="28.0" width="2.3" height="1.1" fill="#9ca494"/><rect x="56.5" y="28.0" width="4.0" height="1.1" fill="#acb4a4"/><rect x="-3.5" y="28.0" width="4.0" height="1.1" fill="#acb4a4"/></pattern>
<pattern id="speckle" width="3" height="3" patternUnits="userSpaceOnUse"><rect x="1" y="1" width="1" height="1" fill="#000" fill-opacity="0.25"/></pattern></defs>
<rect x="0" y="0" width="955" height="671" fill="#ababab"/><rect x="8" y="2" width="937" height="664" fill="#5f5f5f"/><rect x="945" y="4" width="3" height="664" fill="#a0a0a0"/><rect x="10" y="666" width="938" height="2" fill="#a0a0a0"/><rect x="10" y="4" width="933" height="660" fill="#ffffff"/><rect x="15.5" y="8.5" width="923" height="651" fill="none" stroke="#000" stroke-width="1"/><line x1="15" y1="25.5" x2="939" y2="25.5" stroke="#000" stroke-width="1"/><line x1="15" y1="642.5" x2="939" y2="642.5" stroke="#000" stroke-width="1"/><line x1="730.5" y1="25" x2="730.5" y2="642" stroke="#000" stroke-width="1"/><line x1="19" y1="370.5" x2="730" y2="370.5" stroke="#6e6e6e" stroke-width="1" stroke-dasharray="2 2.56"/><text x="23" y="16" font-size="8.3" font-weight="normal" text-anchor="start" fill="#0a0a0a" stroke="#0a0a0a" stroke-width="0.22" textLength="117" lengthAdjust="spacingAndGlyphs">Wilcom EmbroideryStudio – Level 3</text><text x="466.5" y="16" font-size="8.3" font-weight="normal" text-anchor="start" fill="#0a0a0a" stroke="#0a0a0a" stroke-width="0.22" textLength="22.5" lengthAdjust="spacingAndGlyphs">Z: 1:27</text><text x="569.5" y="16" font-size="8.3" font-weight="normal" text-anchor="start" fill="#0a0a0a" stroke="#0a0a0a" stroke-width="0.22" textLength="96" lengthAdjust="spacingAndGlyphs">bunny face 17012022 2 7 inch</text><text x="726.5" y="16" font-size="8.3" font-weight="normal" text-anchor="start" fill="#0a0a0a" stroke="#0a0a0a" stroke-width="0.22" textLength="40" lengthAdjust="spacingAndGlyphs">H: 114.4 mm</text><text x="773.5" y="16" font-size="8.3" font-weight="normal" text-anchor="start" fill="#0a0a0a" stroke="#0a0a0a" stroke-width="0.22" textLength="42" lengthAdjust="spacingAndGlyphs">W: 176.0 mm</text><text x="23" y="650" font-size="8.3" font-weight="normal" text-anchor="start" fill="#0a0a0a" stroke="#0a0a0a" stroke-width="0.22" textLength="22.6" lengthAdjust="spacingAndGlyphs">Author:</text><text x="181" y="650" font-size="8.3" font-weight="normal" text-anchor="start" fill="#0a0a0a" stroke="#0a0a0a" stroke-width="0.22" textLength="82" lengthAdjust="spacingAndGlyphs">Last Saved: 17 Jan, 2022</text><text x="320" y="650" font-size="8.3" font-weight="normal" text-anchor="start" fill="#0a0a0a" stroke="#0a0a0a" stroke-width="0.22" textLength="89.7" lengthAdjust="spacingAndGlyphs">Printed: 17 Jan, 2022 20:36</text><text x="504" y="650" font-size="8.3" font-weight="normal" text-anchor="start" fill="#0a0a0a" stroke="#0a0a0a" stroke-width="0.22" textLength="33.4" lengthAdjust="spacingAndGlyphs">Keywords:</text><text transform="translate(734.3,33) scale(0.91,1)" x="0" y="0" font-size="8.3" font-weight="normal" text-anchor="start" fill="#0a0a0a" stroke="#0a0a0a" stroke-width="0.22">Stitches:</text><text transform="translate(838.5,33) scale(0.91,1)" x="0" y="0" font-size="8.3" font-weight="normal" text-anchor="start" fill="#0a0a0a" stroke="#0a0a0a" stroke-width="0.22">15373</text><text transform="translate(734.3,43.8) scale(0.91,1)" x="0" y="0" font-size="8.3" font-weight="normal" text-anchor="start" fill="#0a0a0a" stroke="#0a0a0a" stroke-width="0.22">Colors:</text><text transform="translate(838.5,43.8) scale(0.91,1)" x="0" y="0" font-size="8.3" font-weight="normal" text-anchor="start" fill="#0a0a0a" stroke="#0a0a0a" stroke-width="0.22">5</text><text transform="translate(734.3,54.4) scale(0.91,1)" x="0" y="0" font-size="8.3" font-weight="normal" text-anchor="start" fill="#0a0a0a" stroke="#0a0a0a" stroke-width="0.22">Color changes:</text><text transform="translate(838.5,54.4) scale(0.91,1)" x="0" y="0" font-size="8.3" font-weight="normal" text-anchor="start" fill="#0a0a0a" stroke="#0a0a0a" stroke-width="0.22">4</text><text transform="translate(734.3,65) scale(0.91,1)" x="0" y="0" font-size="8.3" font-weight="normal" text-anchor="start" fill="#0a0a0a" stroke="#0a0a0a" stroke-width="0.22">Stops:</text><text transform="translate(838.5,65) scale(0.91,1)" x="0" y="0" font-size="8.3" font-weight="normal" text-anchor="start" fill="#0a0a0a" stroke="#0a0a0a" stroke-width="0.22">5</text><text transform="translate(734.3,86.3) scale(0.91,1)" x="0" y="0" font-size="8.3" font-weight="normal" text-anchor="start" fill="#0a0a0a" stroke="#0a0a0a" stroke-width="0.22">Machine:</text><text transform="translate(838.5,86.3) scale(0.91,1)" x="0" y="0" font-size="8.3" font-weight="normal" text-anchor="start" fill="#0a0a0a" stroke="#0a0a0a" stroke-width="0.22">Tajima</text><text transform="translate(734.3,96.9) scale(0.91,1)" x="0" y="0" font-size="8.3" font-weight="normal" text-anchor="start" fill="#0a0a0a" stroke="#0a0a0a" stroke-width="0.22">Trims:</text><text transform="translate(838.5,96.9) scale(0.91,1)" x="0" y="0" font-size="8.3" font-weight="normal" text-anchor="start" fill="#0a0a0a" stroke="#0a0a0a" stroke-width="0.22">13</text><text transform="translate(734.3,118) scale(0.91,1)" x="0" y="0" font-size="8.3" font-weight="normal" text-anchor="start" fill="#0a0a0a" stroke="#0a0a0a" stroke-width="0.22">Left:</text><text transform="translate(838.5,118) scale(0.91,1)" x="0" y="0" font-size="8.3" font-weight="normal" text-anchor="start" fill="#0a0a0a" stroke="#0a0a0a" stroke-width="0.22">88.0 mm</text><text transform="translate(734.3,128.7) scale(0.91,1)" x="0" y="0" font-size="8.3" font-weight="normal" text-anchor="start" fill="#0a0a0a" stroke="#0a0a0a" stroke-width="0.22">Right:</text><text transform="translate(838.5,128.7) scale(0.91,1)" x="0" y="0" font-size="8.3" font-weight="normal" text-anchor="start" fill="#0a0a0a" stroke="#0a0a0a" stroke-width="0.22">88.0 mm</text><text transform="translate(734.3,139.3) scale(0.91,1)" x="0" y="0" font-size="8.3" font-weight="normal" text-anchor="start" fill="#0a0a0a" stroke="#0a0a0a" stroke-width="0.22">Up:</text><text transform="translate(838.5,139.3) scale(0.91,1)" x="0" y="0" font-size="8.3" font-weight="normal" text-anchor="start" fill="#0a0a0a" stroke="#0a0a0a" stroke-width="0.22">57.2 mm</text><text transform="translate(734.3,150) scale(0.91,1)" x="0" y="0" font-size="8.3" font-weight="normal" text-anchor="start" fill="#0a0a0a" stroke="#0a0a0a" stroke-width="0.22">Down:</text><text transform="translate(838.5,150) scale(0.91,1)" x="0" y="0" font-size="8.3" font-weight="normal" text-anchor="start" fill="#0a0a0a" stroke="#0a0a0a" stroke-width="0.22">57.2 mm</text><text transform="translate(734.3,171.2) scale(0.91,1)" x="0" y="0" font-size="8.3" font-weight="normal" text-anchor="start" fill="#0a0a0a" stroke="#0a0a0a" stroke-width="0.22">EndX:</text><text transform="translate(838.5,171.2) scale(0.91,1)" x="0" y="0" font-size="8.3" font-weight="normal" text-anchor="start" fill="#0a0a0a" stroke="#0a0a0a" stroke-width="0.22">0.0 mm</text><text transform="translate(734.3,181.9) scale(0.91,1)" x="0" y="0" font-size="8.3" font-weight="normal" text-anchor="start" fill="#0a0a0a" stroke="#0a0a0a" stroke-width="0.22">EndY:</text><text transform="translate(838.5,181.9) scale(0.91,1)" x="0" y="0" font-size="8.3" font-weight="normal" text-anchor="start" fill="#0a0a0a" stroke="#0a0a0a" stroke-width="0.22">0.0 mm</text><text transform="translate(734.3,203) scale(0.91,1)" x="0" y="0" font-size="8.3" font-weight="normal" text-anchor="start" fill="#0a0a0a" stroke="#0a0a0a" stroke-width="0.22">Max Stitch:</text><text transform="translate(838.5,203) scale(0.91,1)" x="0" y="0" font-size="8.3" font-weight="normal" text-anchor="start" fill="#0a0a0a" stroke="#0a0a0a" stroke-width="0.22">11.2 mm</text><text transform="translate(734.3,213.7) scale(0.91,1)" x="0" y="0" font-size="8.3" font-weight="normal" text-anchor="start" fill="#0a0a0a" stroke="#0a0a0a" stroke-width="0.22">Min Stitch:</text><text transform="translate(838.5,213.7) scale(0.91,1)" x="0" y="0" font-size="8.3" font-weight="normal" text-anchor="start" fill="#0a0a0a" stroke="#0a0a0a" stroke-width="0.22">0.2 mm</text><text transform="translate(734.3,224.3) scale(0.91,1)" x="0" y="0" font-size="8.3" font-weight="normal" text-anchor="start" fill="#0a0a0a" stroke="#0a0a0a" stroke-width="0.22">Max Jump:</text><text transform="translate(838.5,224.3) scale(0.91,1)" x="0" y="0" font-size="8.3" font-weight="normal" text-anchor="start" fill="#0a0a0a" stroke="#0a0a0a" stroke-width="0.22">7.4 mm</text><rect x="734" y="239" width="1" height="21" fill="#141414"/><rect x="735" y="239" width="1" height="21" fill="#607890"/><rect x="736" y="239" width="1" height="21" fill="#141414"/><rect x="737" y="239" width="1" height="21" fill="#607890"/><rect x="738" y="239" width="1" height="21" fill="#f2e6d2"/><rect x="739" y="239" width="1" height="21" fill="#20182a"/><rect x="740" y="239" width="1" height="21" fill="#8898b0"/><rect x="741" y="239" width="1" height="21" fill="#0c0c18"/><rect x="742" y="239" width="1" height="21" fill="#9aa890"/><rect x="743" y="239" width="1" height="21" fill="#d8eef8"/><rect x="744" y="239" width="1" height="21" fill="#20182a"/><rect x="745" y="239" width="1" height="21" fill="#6a7a98"/><rect x="746" y="239" width="1" height="21" fill="#eaf2e6"/><rect x="747" y="239" width="1" height="21" fill="#102030"/><rect x="748" y="239" width="1" height="21" fill="#0c0c18"/><rect x="749" y="239" width="1" height="21" fill="#607890"/><rect x="750" y="239" width="1" height="21" fill="#d8eef8"/><rect x="751" y="239" width="1" height="21" fill="#0c0c18"/><rect x="752" y="239" width="1" height="21" fill="#1c0c16"/><rect x="753" y="239" width="1" height="21" fill="#8898b0"/><rect x="754" y="239" width="1" height="21" fill="#cce4f0"/><rect x="755" y="239" width="1" height="21" fill="#0a1820"/><rect x="756" y="239" width="1" height="21" fill="#607890"/><rect x="757" y="239" width="1" height="21" fill="#f2e6d2"/><rect x="758" y="239" width="1" height="21" fill="#102030"/><rect x="759" y="239" width="1" height="21" fill="#7a8aa8"/><rect x="760" y="239" width="1" height="21" fill="#cce4f0"/><rect x="761" y="239" width="1" height="21" fill="#102030"/><rect x="762" y="239" width="1" height="21" fill="#8898b0"/><rect x="763" y="239" width="1" height="21" fill="#0c0c18"/><rect x="764" y="239" width="1" height="21" fill="#a89088"/><rect x="765" y="239" width="1" height="21" fill="#20182a"/><rect x="766" y="239" width="1" height="21" fill="#7a8aa8"/><rect x="767" y="239" width="1" height="21" fill="#d8eef8"/><rect x="768" y="239" width="1" height="21" fill="#141414"/><rect x="769" y="239" width="1" height="21" fill="#0a1820"/><rect x="770" y="239" width="1" height="21" fill="#6a7a98"/><rect x="771" y="239" width="1" height="21" fill="#d8eef8"/><rect x="772" y="239" width="1" height="21" fill="#102030"/><rect x="773" y="239" width="1" height="21" fill="#1c0c16"/><rect x="774" y="239" width="1" height="21" fill="#7a8aa8"/><rect x="775" y="239" width="1" height="21" fill="#cce4f0"/><rect x="776" y="239" width="1" height="21" fill="#141414"/><rect x="777" y="239" width="1" height="21" fill="#102030"/><rect x="778" y="239" width="1" height="21" fill="#9aa890"/><rect x="779" y="239" width="1" height="21" fill="#0a1820"/><rect x="780" y="239" width="1" height="21" fill="#a89088"/><rect x="781" y="239" width="1" height="21" fill="#cce4f0"/><rect x="782" y="239" width="1" height="21" fill="#0c0c18"/><rect x="783" y="239" width="1" height="21" fill="#102030"/><rect x="784" y="239" width="1" height="21" fill="#7a8aa8"/><rect x="785" y="239" width="1" height="21" fill="#cce4f0"/><rect x="786" y="239" width="1" height="21" fill="#141414"/><rect x="787" y="239" width="1" height="21" fill="#20182a"/><rect x="788" y="239" width="1" height="21" fill="#9aa890"/><rect x="789" y="239" width="1" height="21" fill="#f2e6d2"/><rect x="790" y="239" width="1" height="21" fill="#102030"/><rect x="791" y="239" width="1" height="21" fill="#6a7a98"/><rect x="792" y="239" width="1" height="21" fill="#d8eef8"/><rect x="793" y="239" width="1" height="21" fill="#141414"/><rect x="794" y="239" width="1" height="21" fill="#9aa890"/><rect x="795" y="239" width="1" height="21" fill="#eaf2e6"/><rect x="796" y="239" width="1" height="21" fill="#0a1820"/><rect x="797" y="239" width="1" height="21" fill="#7a8aa8"/><rect x="798" y="239" width="1" height="21" fill="#cce4f0"/><rect x="799" y="239" width="1" height="21" fill="#20182a"/><rect x="800" y="239" width="1" height="21" fill="#7a8aa8"/><rect x="801" y="239" width="1" height="21" fill="#f2e6d2"/><rect x="802" y="239" width="1" height="21" fill="#1c0c16"/><rect x="803" y="239" width="1" height="21" fill="#7a8aa8"/><rect x="804" y="239" width="1" height="21" fill="#0a1820"/><rect x="805" y="239" width="1" height="21" fill="#6a7a98"/><rect x="806" y="239" width="1" height="21" fill="#d8eef8"/><rect x="807" y="239" width="1" height="21" fill="#1c0c16"/><rect x="808" y="239" width="1" height="21" fill="#9aa890"/><rect x="809" y="239" width="1" height="21" fill="#e2d4e2"/><rect x="810" y="239" width="1" height="21" fill="#0a1820"/><rect x="811" y="239" width="1" height="21" fill="#9aa890"/><rect x="812" y="239" width="1" height="21" fill="#141414"/><rect x="813" y="239" width="1" height="21" fill="#9aa890"/><rect x="814" y="239" width="1" height="21" fill="#1c0c16"/><rect x="815" y="239" width="1" height="21" fill="#a89088"/><rect x="816" y="239" width="1" height="21" fill="#20182a"/><rect x="817" y="239" width="1" height="21" fill="#1c0c16"/><rect x="818" y="239" width="1" height="21" fill="#9aa890"/><rect x="819" y="239" width="1" height="21" fill="#eaf2e6"/><rect x="820" y="239" width="1" height="21" fill="#1c0c16"/><rect x="821" y="239" width="1" height="21" fill="#6a7a98"/><rect x="822" y="239" width="1" height="21" fill="#20182a"/><rect x="823" y="239" width="1" height="21" fill="#0c0c18"/><rect x="824" y="239" width="1" height="21" fill="#7a8aa8"/><rect x="825" y="239" width="1" height="21" fill="#eaf2e6"/><rect x="826" y="239" width="1" height="21" fill="#0a1820"/><rect x="827" y="239" width="1" height="21" fill="#102030"/><rect x="828" y="239" width="1" height="21" fill="#6a7a98"/><rect x="829" y="239" width="1" height="21" fill="#eaf2e6"/><rect x="830" y="239" width="1" height="21" fill="#141414"/><rect x="831" y="239" width="1" height="21" fill="#9aa890"/><rect x="832" y="239" width="1" height="21" fill="#0c0c18"/><rect x="833" y="239" width="1" height="21" fill="#141414"/><rect x="834" y="239" width="1" height="21" fill="#8898b0"/><rect x="835" y="239" width="1" height="21" fill="#eaf2e6"/><rect x="836" y="239" width="1" height="21" fill="#20182a"/><rect x="837" y="239" width="1" height="21" fill="#1c0c16"/><rect x="838" y="239" width="1" height="21" fill="#9aa890"/><rect x="839" y="239" width="1" height="21" fill="#d8eef8"/><rect x="840" y="239" width="1" height="21" fill="#0a1820"/><rect x="841" y="239" width="1" height="21" fill="#9aa890"/><rect x="842" y="239" width="1" height="21" fill="#f2e6d2"/><rect x="843" y="239" width="1" height="21" fill="#0a1820"/><rect x="844" y="239" width="1" height="21" fill="#8898b0"/><rect x="845" y="239" width="1" height="21" fill="#0c0c18"/><rect x="846" y="239" width="1" height="21" fill="#6a7a98"/><rect x="847" y="239" width="1" height="21" fill="#102030"/><rect x="848" y="239" width="1" height="21" fill="#8898b0"/><rect x="849" y="239" width="1" height="21" fill="#f2e6d2"/><rect x="850" y="239" width="1" height="21" fill="#20182a"/><rect x="851" y="239" width="1" height="21" fill="#0c0c18"/><rect x="852" y="239" width="1" height="21" fill="#6a7a98"/><rect x="853" y="239" width="1" height="21" fill="#102030"/><rect x="854" y="239" width="1" height="21" fill="#7a8aa8"/><rect x="855" y="239" width="1" height="21" fill="#d8eef8"/><rect x="856" y="239" width="1" height="21" fill="#141414"/><rect x="857" y="239" width="1" height="21" fill="#0a1820"/><rect x="858" y="239" width="1" height="21" fill="#a89088"/><rect x="859" y="239" width="1" height="21" fill="#d8eef8"/><rect x="860" y="239" width="1" height="21" fill="#0c0c18"/><rect x="861" y="239" width="1" height="21" fill="#a89088"/><rect x="862" y="239" width="1" height="21" fill="#f2e6d2"/><rect x="863" y="239" width="1" height="21" fill="#0a1820"/><rect x="864" y="239" width="1" height="21" fill="#908878"/><rect x="734" y="260" width="1" height="11" fill="#141414"/><rect x="735" y="260" width="1" height="11" fill="#8898b0"/><rect x="736" y="260" width="1" height="11" fill="#f2e6d2"/><rect x="737" y="260" width="1" height="11" fill="#141414"/><rect x="738" y="260" width="1" height="11" fill="#0a1820"/><rect x="739" y="260" width="1" height="11" fill="#6a7a98"/><rect x="740" y="260" width="1" height="11" fill="#cce4f0"/><rect x="741" y="260" width="1" height="11" fill="#102030"/><rect x="742" y="260" width="1" height="11" fill="#9aa890"/><rect x="743" y="260" width="1" height="11" fill="#eaf2e6"/><rect x="744" y="260" width="1" height="11" fill="#1c0c16"/><rect x="745" y="260" width="1" height="11" fill="#a89088"/><rect x="746" y="260" width="1" height="11" fill="#f2e6d2"/><rect x="747" y="260" width="1" height="11" fill="#0c0c18"/><rect x="748" y="260" width="1" height="11" fill="#9aa890"/><rect x="749" y="260" width="1" height="11" fill="#e2d4e2"/><rect x="750" y="260" width="1" height="11" fill="#102030"/><rect x="751" y="260" width="1" height="11" fill="#607890"/><rect x="752" y="260" width="1" height="11" fill="#d8eef8"/><rect x="753" y="260" width="1" height="11" fill="#102030"/><rect x="754" y="260" width="1" height="11" fill="#7a8aa8"/><rect x="755" y="260" width="1" height="11" fill="#141414"/><rect x="756" y="260" width="1" height="11" fill="#7a8aa8"/><rect x="757" y="260" width="1" height="11" fill="#f2e6d2"/><rect x="758" y="260" width="1" height="11" fill="#20182a"/><rect x="759" y="260" width="1" height="11" fill="#8898b0"/><rect x="760" y="260" width="1" height="11" fill="#d8eef8"/><rect x="761" y="260" width="1" height="11" fill="#20182a"/><rect x="762" y="260" width="1" height="11" fill="#0c0c18"/><rect x="763" y="260" width="1" height="11" fill="#6a7a98"/><rect x="764" y="260" width="1" height="11" fill="#eaf2e6"/><rect x="765" y="260" width="1" height="11" fill="#141414"/><rect x="766" y="260" width="1" height="11" fill="#6a7a98"/><rect x="767" y="260" width="1" height="11" fill="#d8eef8"/><rect x="768" y="260" width="1" height="11" fill="#1c0c16"/><rect x="769" y="260" width="1" height="11" fill="#908878"/><rect x="770" y="260" width="1" height="11" fill="#e2d4e2"/><rect x="771" y="260" width="1" height="11" fill="#102030"/><rect x="772" y="260" width="1" height="11" fill="#a89088"/><rect x="773" y="260" width="1" height="11" fill="#f2e6d2"/><rect x="774" y="260" width="1" height="11" fill="#0a1820"/><rect x="775" y="260" width="1" height="11" fill="#8898b0"/><rect x="776" y="260" width="1" height="11" fill="#eaf2e6"/><rect x="777" y="260" width="1" height="11" fill="#1c0c16"/><rect x="778" y="260" width="1" height="11" fill="#141414"/><rect x="779" y="260" width="1" height="11" fill="#7a8aa8"/><rect x="780" y="260" width="1" height="11" fill="#f2e6d2"/><rect x="781" y="260" width="1" height="11" fill="#102030"/><rect x="782" y="260" width="1" height="11" fill="#6a7a98"/><rect x="783" y="260" width="1" height="11" fill="#eaf2e6"/><rect x="784" y="260" width="1" height="11" fill="#0c0c18"/><rect x="785" y="260" width="1" height="11" fill="#9aa890"/><rect x="786" y="260" width="1" height="11" fill="#e2d4e2"/><rect x="787" y="260" width="1" height="11" fill="#0c0c18"/><rect x="788" y="260" width="1" height="11" fill="#6a7a98"/><rect x="789" y="260" width="1" height="11" fill="#d8eef8"/><rect x="790" y="260" width="1" height="11" fill="#20182a"/><rect x="791" y="260" width="1" height="11" fill="#9aa890"/><rect x="792" y="260" width="1" height="11" fill="#cce4f0"/><rect x="793" y="260" width="1" height="11" fill="#141414"/><rect x="794" y="260" width="1" height="11" fill="#607890"/><rect x="795" y="260" width="1" height="11" fill="#f2e6d2"/><rect x="796" y="260" width="1" height="11" fill="#141414"/><rect x="797" y="260" width="1" height="11" fill="#a89088"/><rect x="798" y="260" width="1" height="11" fill="#f2e6d2"/><rect x="799" y="260" width="1" height="11" fill="#20182a"/><rect x="800" y="260" width="1" height="11" fill="#0a1820"/><rect x="801" y="260" width="1" height="11" fill="#607890"/><rect x="802" y="260" width="1" height="11" fill="#1c0c16"/><rect x="803" y="260" width="1" height="11" fill="#0c0c18"/><rect x="804" y="260" width="1" height="11" fill="#8898b0"/><rect x="805" y="260" width="1" height="11" fill="#eaf2e6"/><rect x="806" y="260" width="1" height="11" fill="#0c0c18"/><rect x="807" y="260" width="1" height="11" fill="#8898b0"/><rect x="808" y="260" width="1" height="11" fill="#d8eef8"/><rect x="809" y="260" width="1" height="11" fill="#0a1820"/><rect x="810" y="260" width="1" height="11" fill="#908878"/><rect x="811" y="260" width="1" height="11" fill="#102030"/><rect x="812" y="260" width="1" height="11" fill="#20182a"/><rect x="813" y="260" width="1" height="11" fill="#8898b0"/><rect x="814" y="260" width="1" height="11" fill="#e2d4e2"/><rect x="815" y="260" width="1" height="11" fill="#0a1820"/><rect x="816" y="260" width="1" height="11" fill="#6a7a98"/><rect x="817" y="260" width="1" height="11" fill="#1c0c16"/><rect x="818" y="260" width="1" height="11" fill="#8898b0"/><rect x="819" y="260" width="1" height="11" fill="#0a1820"/><rect x="820" y="260" width="1" height="11" fill="#607890"/><rect x="821" y="260" width="1" height="11" fill="#cce4f0"/><rect x="822" y="260" width="1" height="11" fill="#102030"/><rect x="823" y="260" width="1" height="11" fill="#908878"/><rect x="824" y="260" width="1" height="11" fill="#e2d4e2"/><rect x="825" y="260" width="1" height="11" fill="#0c0c18"/><rect x="826" y="260" width="1" height="11" fill="#908878"/><rect x="827" y="260" width="1" height="11" fill="#eaf2e6"/><rect x="828" y="260" width="1" height="11" fill="#0a1820"/><rect x="829" y="260" width="1" height="11" fill="#9aa890"/><rect x="830" y="260" width="1" height="11" fill="#cce4f0"/><rect x="831" y="260" width="1" height="11" fill="#0c0c18"/><rect x="832" y="260" width="1" height="11" fill="#8898b0"/><rect x="833" y="260" width="1" height="11" fill="#e2d4e2"/><rect x="834" y="260" width="1" height="11" fill="#0c0c18"/><rect x="835" y="260" width="1" height="11" fill="#8898b0"/><rect x="836" y="260" width="1" height="11" fill="#cce4f0"/><rect x="837" y="260" width="1" height="11" fill="#1c0c16"/><rect x="838" y="260" width="1" height="11" fill="#a89088"/><rect x="839" y="260" width="1" height="11" fill="#102030"/><rect x="840" y="260" width="1" height="11" fill="#8898b0"/><rect x="841" y="260" width="1" height="11" fill="#f2e6d2"/><rect x="842" y="260" width="1" height="11" fill="#0c0c18"/><rect x="843" y="260" width="1" height="11" fill="#7a8aa8"/><rect x="844" y="260" width="1" height="11" fill="#20182a"/><rect x="845" y="260" width="1" height="11" fill="#141414"/><rect x="846" y="260" width="1" height="11" fill="#607890"/><rect x="847" y="260" width="1" height="11" fill="#e2d4e2"/><rect x="848" y="260" width="1" height="11" fill="#1c0c16"/><rect x="849" y="260" width="1" height="11" fill="#607890"/><rect x="850" y="260" width="1" height="11" fill="#eaf2e6"/><rect x="851" y="260" width="1" height="11" fill="#141414"/><rect x="852" y="260" width="1" height="11" fill="#7a8aa8"/><rect x="853" y="260" width="1" height="11" fill="#eaf2e6"/><rect x="854" y="260" width="1" height="11" fill="#102030"/><rect x="855" y="260" width="1" height="11" fill="#8898b0"/><rect x="856" y="260" width="1" height="11" fill="#cce4f0"/><rect x="857" y="260" width="1" height="11" fill="#0a1820"/><rect x="858" y="260" width="1" height="11" fill="#908878"/><rect x="859" y="260" width="1" height="11" fill="#d8eef8"/><rect x="860" y="260" width="1" height="11" fill="#102030"/><rect x="861" y="260" width="1" height="11" fill="#908878"/><rect x="862" y="260" width="1" height="11" fill="#cce4f0"/><rect x="863" y="260" width="1" height="11" fill="#0a1820"/><rect x="864" y="260" width="1" height="11" fill="#1c0c16"/><rect x="865" y="260" width="1" height="11" fill="#6a7a98"/><rect x="866" y="260" width="1" height="11" fill="#cce4f0"/><rect x="867" y="260" width="1" height="11" fill="#1c0c16"/><rect x="868" y="260" width="1" height="11" fill="#20182a"/><rect x="869" y="260" width="1" height="11" fill="#a89088"/><rect x="870" y="260" width="1" height="11" fill="#e2d4e2"/><rect x="871" y="260" width="1" height="11" fill="#0c0c18"/><rect x="872" y="260" width="1" height="11" fill="#7a8aa8"/><rect x="873" y="260" width="1" height="11" fill="#0a1820"/><rect x="874" y="260" width="1" height="11" fill="#9aa890"/><rect x="875" y="260" width="1" height="11" fill="#e2d4e2"/><rect x="876" y="260" width="1" height="11" fill="#1c0c16"/><rect x="877" y="260" width="1" height="11" fill="#9aa890"/><rect x="878" y="260" width="1" height="11" fill="#e2d4e2"/><rect x="879" y="260" width="1" height="11" fill="#1c0c16"/><rect x="880" y="260" width="1" height="11" fill="#6a7a98"/><rect x="881" y="260" width="1" height="11" fill="#f2e6d2"/><rect x="882" y="260" width="1" height="11" fill="#141414"/><rect x="883" y="260" width="1" height="11" fill="#607890"/><rect x="884" y="260" width="1" height="11" fill="#f2e6d2"/><rect x="885" y="260" width="1" height="11" fill="#141414"/><rect x="886" y="260" width="1" height="11" fill="#607890"/><rect x="887" y="260" width="1" height="11" fill="#20182a"/><rect x="888" y="260" width="1" height="11" fill="#908878"/><rect x="889" y="260" width="1" height="11" fill="#d8eef8"/><rect x="890" y="260" width="1" height="11" fill="#20182a"/><rect x="891" y="260" width="1" height="11" fill="#a89088"/><rect x="892" y="260" width="1" height="11" fill="#d8eef8"/><rect x="893" y="260" width="1" height="11" fill="#0a1820"/><rect x="894" y="260" width="1" height="11" fill="#a89088"/><rect x="895" y="260" width="1" height="11" fill="#f2e6d2"/><rect x="896" y="260" width="1" height="11" fill="#1c0c16"/><rect x="897" y="260" width="1" height="11" fill="#607890"/><rect x="898" y="260" width="1" height="11" fill="#e2d4e2"/><rect x="899" y="260" width="1" height="11" fill="#141414"/><rect x="900" y="260" width="1" height="11" fill="#0a1820"/><rect x="901" y="260" width="1" height="11" fill="#a89088"/><rect x="902" y="260" width="1" height="11" fill="#eaf2e6"/><rect x="903" y="260" width="1" height="11" fill="#0a1820"/><rect x="904" y="260" width="1" height="11" fill="#607890"/><rect x="905" y="260" width="1" height="11" fill="#20182a"/><rect x="906" y="260" width="1" height="11" fill="#9aa890"/><rect x="907" y="260" width="1" height="11" fill="#d8eef8"/><rect x="908" y="260" width="1" height="11" fill="#102030"/><rect x="909" y="260" width="1" height="11" fill="#607890"/><rect x="910" y="260" width="1" height="11" fill="#cce4f0"/><rect x="911" y="260" width="1" height="11" fill="#20182a"/><rect x="912" y="260" width="1" height="11" fill="#a89088"/><rect x="913" y="260" width="1" height="11" fill="#cce4f0"/><rect x="914" y="260" width="1" height="11" fill="#141414"/><rect x="915" y="260" width="1" height="11" fill="#6a7a98"/><rect x="916" y="260" width="1" height="11" fill="#1c0c16"/><rect x="917" y="260" width="1" height="11" fill="#1c0c16"/><rect x="918" y="260" width="1" height="11" fill="#607890"/><rect x="919" y="260" width="1" height="11" fill="#e2d4e2"/><rect x="920" y="260" width="1" height="11" fill="#20182a"/><rect x="921" y="260" width="1" height="11" fill="#607890"/><rect x="922" y="260" width="1" height="11" fill="#102030"/><rect x="923" y="260" width="1" height="11" fill="#a89088"/><rect x="924" y="260" width="1" height="11" fill="#0a1820"/><rect x="925" y="260" width="1" height="11" fill="#607890"/><rect x="926" y="260" width="1" height="11" fill="#1c0c16"/><rect x="927" y="260" width="1" height="11" fill="#607890"/><rect x="928" y="260" width="1" height="11" fill="#e2d4e2"/><rect x="929" y="260" width="1" height="11" fill="#0c0c18"/><rect x="930" y="260" width="1" height="11" fill="#1c0c16"/><text transform="translate(734.3,278) scale(0.91,1)" x="0" y="0" font-size="8.3" font-weight="normal" text-anchor="start" fill="#0a0a0a" stroke="#0a0a0a" stroke-width="0.22">Colorway:</text><text transform="translate(838.5,278) scale(0.91,1)" x="0" y="0" font-size="8.3" font-weight="normal" text-anchor="start" fill="#0a0a0a" stroke="#0a0a0a" stroke-width="0.22">Colorway 1</text><text x="734" y="300" font-size="9" font-weight="bold" text-anchor="start" fill="#0a0a0a" stroke="#0a0a0a" stroke-width="0.22" textLength="5" lengthAdjust="spacingAndGlyphs">#</text><text x="759.5" y="300" font-size="9" font-weight="bold" text-anchor="start" fill="#0a0a0a" stroke="#0a0a0a" stroke-width="0.22" textLength="11.5" lengthAdjust="spacingAndGlyphs">N#</text><text x="816.5" y="300" font-size="9" font-weight="bold" text-anchor="start" fill="#0a0a0a" stroke="#0a0a0a" stroke-width="0.22" textLength="11" lengthAdjust="spacingAndGlyphs">St.</text><text x="847.3" y="300" font-size="9" font-weight="bold" text-anchor="start" fill="#0a0a0a" stroke="#0a0a0a" stroke-width="0.22" textLength="55.6" lengthAdjust="spacingAndGlyphs">Descr_Code</text><rect x="734" y="301" width="5.5" height="1" fill="#111"/><rect x="759.5" y="301" width="12.0" height="1" fill="#111"/><rect x="816.5" y="301" width="11.5" height="1" fill="#111"/><rect x="847.3" y="301" width="55.700000000000045" height="1" fill="#111"/><text transform="translate(734.5,319.8) scale(0.91,1)" x="0" y="0" font-size="8.3" font-weight="normal" text-anchor="start" fill="#0a0a0a" stroke="#0a0a0a" stroke-width="0.22">1.</text><text transform="translate(758.7,319.8) scale(0.91,1)" x="0" y="0" font-size="8.3" font-weight="normal" text-anchor="start" fill="#0a0a0a" stroke="#0a0a0a" stroke-width="0.22">10</text><rect x="782.5" y="313.3" width="7.5" height="9" fill="#e8a0a8" stroke="#000" stroke-width="1"/><text transform="translate(837.6,319.8) scale(0.91,1)" x="0" y="0" font-size="8.3" font-weight="normal" text-anchor="end" fill="#0a0a0a" stroke="#0a0a0a" stroke-width="0.22">1991</text><text transform="translate(843.3,319.8) scale(0.91,1)" x="0" y="0" font-size="8.3" font-weight="normal" text-anchor="start" fill="#0a0a0a" stroke="#0a0a0a" stroke-width="0.22">Pink 10</text><text x="746" y="330.8" font-size="8.3" font-weight="normal" text-anchor="start" fill="#0a0a0a" stroke="#0a0a0a" stroke-width="0.22" textLength="48.9" lengthAdjust="spacingAndGlyphs">Brand: Wilcom</text><text transform="translate(734.5,341.1) scale(0.91,1)" x="0" y="0" font-size="8.3" font-weight="normal" text-anchor="start" fill="#0a0a0a" stroke="#0a0a0a" stroke-width="0.22">2.</text><text transform="translate(758.7,341.1) scale(0.91,1)" x="0" y="0" font-size="8.3" font-weight="normal" text-anchor="start" fill="#0a0a0a" stroke="#0a0a0a" stroke-width="0.22">22</text><rect x="782.5" y="334.6" width="7.5" height="9" fill="#78c0e8" stroke="#000" stroke-width="1"/><text transform="translate(837.6,341.1) scale(0.91,1)" x="0" y="0" font-size="8.3" font-weight="normal" text-anchor="end" fill="#0a0a0a" stroke="#0a0a0a" stroke-width="0.22">2812</text><text transform="translate(843.3,341.1) scale(0.91,1)" x="0" y="0" font-size="8.3" font-weight="normal" text-anchor="start" fill="#0a0a0a" stroke="#0a0a0a" stroke-width="0.22">Ice Blue 22</text><text x="746" y="352.1" font-size="8.3" font-weight="normal" text-anchor="start" fill="#0a0a0a" stroke="#0a0a0a" stroke-width="0.22" textLength="48.9" lengthAdjust="spacingAndGlyphs">Brand: Wilcom</text><text transform="translate(734.5,362.40000000000003) scale(0.91,1)" x="0" y="0" font-size="8.3" font-weight="normal" text-anchor="start" fill="#0a0a0a" stroke="#0a0a0a" stroke-width="0.22">3.</text><text transform="translate(758.7,362.40000000000003) scale(0.91,1)" x="0" y="0" font-size="8.3" font-weight="normal" text-anchor="start" fill="#0a0a0a" stroke="#0a0a0a" stroke-width="0.22">13</text><rect x="782.5" y="355.9" width="7.5" height="9" fill="#202020" stroke="#000" stroke-width="1"/><text transform="translate(837.6,362.40000000000003) scale(0.91,1)" x="0" y="0" font-size="8.3" font-weight="normal" text-anchor="end" fill="#0a0a0a" stroke="#0a0a0a" stroke-width="0.22">8822</text><text transform="translate(843.3,362.40000000000003) scale(0.91,1)" x="0" y="0" font-size="8.3" font-weight="normal" text-anchor="start" fill="#0a0a0a" stroke="#0a0a0a" stroke-width="0.22">Black 13</text><text x="746" y="373.40000000000003" font-size="8.3" font-weight="normal" text-anchor="start" fill="#0a0a0a" stroke="#0a0a0a" stroke-width="0.22" textLength="48.9" lengthAdjust="spacingAndGlyphs">Brand: Wilcom</text><text transform="translate(734.5,383.70000000000005) scale(0.91,1)" x="0" y="0" font-size="8.3" font-weight="normal" text-anchor="start" fill="#0a0a0a" stroke="#0a0a0a" stroke-width="0.22">4.</text><text transform="translate(758.7,383.70000000000005) scale(0.91,1)" x="0" y="0" font-size="8.3" font-weight="normal" text-anchor="start" fill="#0a0a0a" stroke="#0a0a0a" stroke-width="0.22">15</text><rect x="782.5" y="377.2" width="7.5" height="9" fill="#ffffff" stroke="#000" stroke-width="1"/><text transform="translate(837.6,383.70000000000005) scale(0.91,1)" x="0" y="0" font-size="8.3" font-weight="normal" text-anchor="end" fill="#0a0a0a" stroke="#0a0a0a" stroke-width="0.22">245</text><text transform="translate(843.3,383.70000000000005) scale(0.91,1)" x="0" y="0" font-size="8.3" font-weight="normal" text-anchor="start" fill="#0a0a0a" stroke="#0a0a0a" stroke-width="0.22">White 15</text><text x="746" y="394.70000000000005" font-size="8.3" font-weight="normal" text-anchor="start" fill="#0a0a0a" stroke="#0a0a0a" stroke-width="0.22" textLength="48.9" lengthAdjust="spacingAndGlyphs">Brand: Wilcom</text><text transform="translate(734.5,405.0) scale(0.91,1)" x="0" y="0" font-size="8.3" font-weight="normal" text-anchor="start" fill="#0a0a0a" stroke="#0a0a0a" stroke-width="0.22">5.</text><text transform="translate(758.7,405.0) scale(0.91,1)" x="0" y="0" font-size="8.3" font-weight="normal" text-anchor="start" fill="#0a0a0a" stroke="#0a0a0a" stroke-width="0.22">14</text><rect x="782.5" y="398.5" width="7.5" height="9" fill="#888888" stroke="#000" stroke-width="1"/><text transform="translate(837.6,405.0) scale(0.91,1)" x="0" y="0" font-size="8.3" font-weight="normal" text-anchor="end" fill="#0a0a0a" stroke="#0a0a0a" stroke-width="0.22">1501</text><text transform="translate(843.3,405.0) scale(0.91,1)" x="0" y="0" font-size="8.3" font-weight="normal" text-anchor="start" fill="#0a0a0a" stroke="#0a0a0a" stroke-width="0.22">Grey 14</text><text x="746" y="416.0" font-size="8.3" font-weight="normal" text-anchor="start" fill="#0a0a0a" stroke="#0a0a0a" stroke-width="0.22" textLength="48.9" lengthAdjust="spacingAndGlyphs">Brand: Wilcom</text><text transform="translate(734.3,425.5) scale(0.91,1)" x="0" y="0" font-size="8.3" font-weight="normal" text-anchor="start" fill="#0a0a0a" stroke="#0a0a0a" stroke-width="0.22">Total Bobbin:</text><text transform="translate(840.3,425.5) scale(0.91,1)" x="0" y="0" font-size="8.3" font-weight="normal" text-anchor="start" fill="#0a0a0a" stroke="#0a0a0a" stroke-width="0.22">44.41m</text>
<svg x="16" y="26" width="714" height="616" viewBox="16 26 714 616" overflow="hidden"><clipPath id="Lc"><ellipse cx="0" cy="0" rx="84.86" ry="104.23" transform="translate(125.28,327.77) rotate(-1.34)" /></clipPath><mask id="Lm" maskUnits="userSpaceOnUse" x="0" y="0" width="955" height="671"><rect x="0" y="0" width="955" height="671" fill="#000"/><ellipse cx="0" cy="0" rx="102.86" ry="121.33" transform="translate(123.92,328.11) rotate(-4.43)" fill="#fff"/><ellipse cx="0" cy="0" rx="82.86" ry="102.23" transform="translate(125.28,327.77) rotate(-1.34)" fill="#000"/></mask><ellipse cx="0" cy="0" rx="84.86" ry="104.23" transform="translate(125.28,327.77) rotate(-1.34)" fill="url(#blueTex)"/><g clip-path="url(#Lc)"><g transform="translate(123.59,327.78) rotate(-3.53)"><ellipse cx="0" cy="0" rx="55.41" ry="100.05" fill="url(#pupilTex)" stroke="#1e1d1a" stroke-width="1.6"/><rect x="0" y="-140" width="200" height="280" fill="url(#pupilTex)"/></g></g><g mask="url(#Lm)"><ellipse cx="0" cy="0" rx="102.86" ry="121.33" transform="translate(123.92,328.11) rotate(-4.43)" fill="#2a2925"/><g filter="url(#blur2)"><ellipse cx="0" cy="0" rx="94.36" ry="113.28" transform="translate(124.6,327.94) rotate(-2.885)" fill="none" stroke="#6c695f" stroke-width="11"/></g><ellipse cx="0" cy="0" rx="102.86" ry="121.33" transform="translate(123.92,328.11) rotate(-4.43)" fill="url(#speckle)"/></g><clipPath id="Rc"><ellipse cx="0" cy="0" rx="85.03" ry="103.38" transform="translate(620.58,327.89) rotate(-5.03)" /></clipPath><mask id="Rm" maskUnits="userSpaceOnUse" x="0" y="0" width="955" height="671"><rect x="0" y="0" width="955" height="671" fill="#000"/><ellipse cx="0" cy="0" rx="103.2" ry="121.23" transform="translate(619.27,327.27) rotate(-6.57)" fill="#fff"/><ellipse cx="0" cy="0" rx="83.03" ry="101.38" transform="translate(620.58,327.89) rotate(-5.03)" fill="#000"/></mask><ellipse cx="0" cy="0" rx="85.03" ry="103.38" transform="translate(620.58,327.89) rotate(-5.03)" fill="url(#blueTex)"/><g clip-path="url(#Rc)"><g transform="translate(634.25,325.64) rotate(-3.46)"><ellipse cx="0" cy="0" rx="71.35" ry="102.69" fill="url(#pupilTex)" stroke="#1e1d1a" stroke-width="1.6"/><rect x="0" y="-140" width="200" height="280" fill="url(#pupilTex)"/></g></g><g mask="url(#Rm)"><ellipse cx="0" cy="0" rx="103.2" ry="121.23" transform="translate(619.27,327.27) rotate(-6.57)" fill="#2a2925"/><g filter="url(#blur2)"><ellipse cx="0" cy="0" rx="94.61500000000001" ry="112.805" transform="translate(619.925,327.58) rotate(-5.800000000000001)" fill="none" stroke="#6c695f" stroke-width="11"/></g><ellipse cx="0" cy="0" rx="103.2" ry="121.23" transform="translate(619.27,327.27) rotate(-6.57)" fill="url(#speckle)"/></g><g filter="url(#blur05)" fill="#f3f5ec"><circle cx="139" cy="289.5" r="11.6"/><circle cx="160" cy="295" r="11.2"/><ellipse cx="0" cy="0" rx="13" ry="9" transform="translate(148,302) rotate(-25)"/><path d="M130,300 L145,314.2 L166,304 Z"/><ellipse cx="136.5" cy="331.5" rx="15.1" ry="12.75"/><circle cx="630.5" cy="303.5" r="9"/><circle cx="645.5" cy="307.6" r="9"/><ellipse cx="0" cy="0" rx="10" ry="7" transform="translate(637.5,313) rotate(-25)"/><path d="M624,310 L633,321.3 L650,313 Z"/><ellipse cx="629" cy="334.8" rx="11.5" ry="9.9"/></g><path d="M33.3,157.6 C66.1,107.3 134.1,91.9 188.0,115.3 L178.5,137.4 C137.8,112.8 80.4,124.1 49.0,158.6 Z" fill="url(#browTex)"/><path d="M544.5,191.0 C557.3,133.4 627.8,102.9 682.5,109.1 L679.2,135.1 C633.7,121.8 576.9,145.8 558.8,190.3 Z" fill="url(#browTex)"/><path d="M54.8,473.2 C59.8,472.7 65.2,475.0 69.7,476.9 C74.2,478.8 77.9,482.0 81.6,484.4 C85.3,486.8 88.2,489.4 92.1,491.1 C96.0,492.8 100.7,493.9 105.0,494.8 C109.3,495.8 113.5,496.6 118.0,496.8 C122.5,497.0 127.8,496.6 132.0,496.0 C136.2,495.4 139.6,493.0 143.2,493.3 C146.8,493.6 150.4,495.5 153.3,497.7 C156.2,499.9 159.1,502.8 160.9,506.6 C162.7,510.4 163.9,515.7 164.1,520.6 C164.3,525.5 163.6,531.4 162.2,535.8 C160.8,540.2 159.0,543.6 155.8,547.2 C152.6,550.8 148.0,554.8 143.2,557.3 C138.3,559.8 132.6,561.3 126.7,562.4 C120.8,563.5 113.5,563.7 107.7,563.6 C101.9,563.5 97.7,562.7 92.1,561.9 C86.5,561.1 79.9,560.4 74.2,558.9 C68.5,557.4 62.8,555.6 57.8,552.9 C52.8,550.2 48.1,546.5 44.4,542.5 C40.7,538.5 37.6,533.8 35.4,529.1 C33.2,524.4 31.5,519.9 31.0,514.2 C30.5,508.5 31.0,500.5 32.5,494.8 C34.0,489.1 36.2,483.5 39.9,479.9 C43.6,476.3 49.8,473.7 54.8,473.2 Z" fill="url(#cheekTex)"/><path d="M54.8,473.2 C59.8,472.7 65.2,475.0 69.7,476.9 C74.2,478.8 77.9,482.0 81.6,484.4 C85.3,486.8 88.2,489.4 92.1,491.1 C96.0,492.8 100.7,493.9 105.0,494.8 C109.3,495.8 113.5,496.6 118.0,496.8 C122.5,497.0 127.8,496.6 132.0,496.0 C136.2,495.4 139.6,493.0 143.2,493.3 C146.8,493.6 150.4,495.5 153.3,497.7 C156.2,499.9 159.1,502.8 160.9,506.6 C162.7,510.4 163.9,515.7 164.1,520.6 C164.3,525.5 163.6,531.4 162.2,535.8 C160.8,540.2 159.0,543.6 155.8,547.2 C152.6,550.8 148.0,554.8 143.2,557.3 C138.3,559.8 132.6,561.3 126.7,562.4 C120.8,563.5 113.5,563.7 107.7,563.6 C101.9,563.5 97.7,562.7 92.1,561.9 C86.5,561.1 79.9,560.4 74.2,558.9 C68.5,557.4 62.8,555.6 57.8,552.9 C52.8,550.2 48.1,546.5 44.4,542.5 C40.7,538.5 37.6,533.8 35.4,529.1 C33.2,524.4 31.5,519.9 31.0,514.2 C30.5,508.5 31.0,500.5 32.5,494.8 C34.0,489.1 36.2,483.5 39.9,479.9 C43.6,476.3 49.8,473.7 54.8,473.2 Z" fill="url(#cheekTex)" transform="translate(744.5,0) scale(-1,1)"/><rect x="361.3" y="468" width="18.5" height="38" fill="url(#stemTex)"/><path d="M287.9,493.9 A41.85,41.85 0 0 0 366.5,501.8" fill="none" stroke="url(#mouthTex)" stroke-width="11.5"/><path d="M374.1,502.2 A42.1,42.1 0 0 0 453.3,493.9" fill="none" stroke="url(#mouthTex)" stroke-width="11.3"/><path d="M370.0,396.3 C378.5,396.4 390.3,396.4 398.0,397.3 C405.7,398.2 411.3,399.3 416.0,401.5 C420.7,403.7 423.5,406.9 426.0,410.5 C428.5,414.1 430.2,418.8 431.0,423.0 C431.8,427.2 431.6,432.0 430.5,436.0 C429.4,440.0 427.8,443.3 424.5,447.0 C421.2,450.7 416.4,454.6 411.0,458.0 C405.6,461.4 398.3,465.2 392.0,467.5 C385.7,469.8 379.2,471.4 373.0,472.0 C366.8,472.6 361.2,472.7 355.0,471.0 C348.8,469.3 341.8,465.7 336.0,462.0 C330.2,458.3 324.1,453.3 320.0,449.0 C315.9,444.7 313.1,440.5 311.5,436.0 C309.9,431.5 309.8,426.5 310.5,422.0 C311.2,417.5 312.6,412.6 315.5,409.0 C318.4,405.4 322.8,402.5 328.0,400.5 C333.2,398.5 340.0,397.7 347.0,397.0 C354.0,396.3 361.5,396.2 370.0,396.3 Z" fill="url(#noseTex)"/></svg>
</svg>
</body></html>
